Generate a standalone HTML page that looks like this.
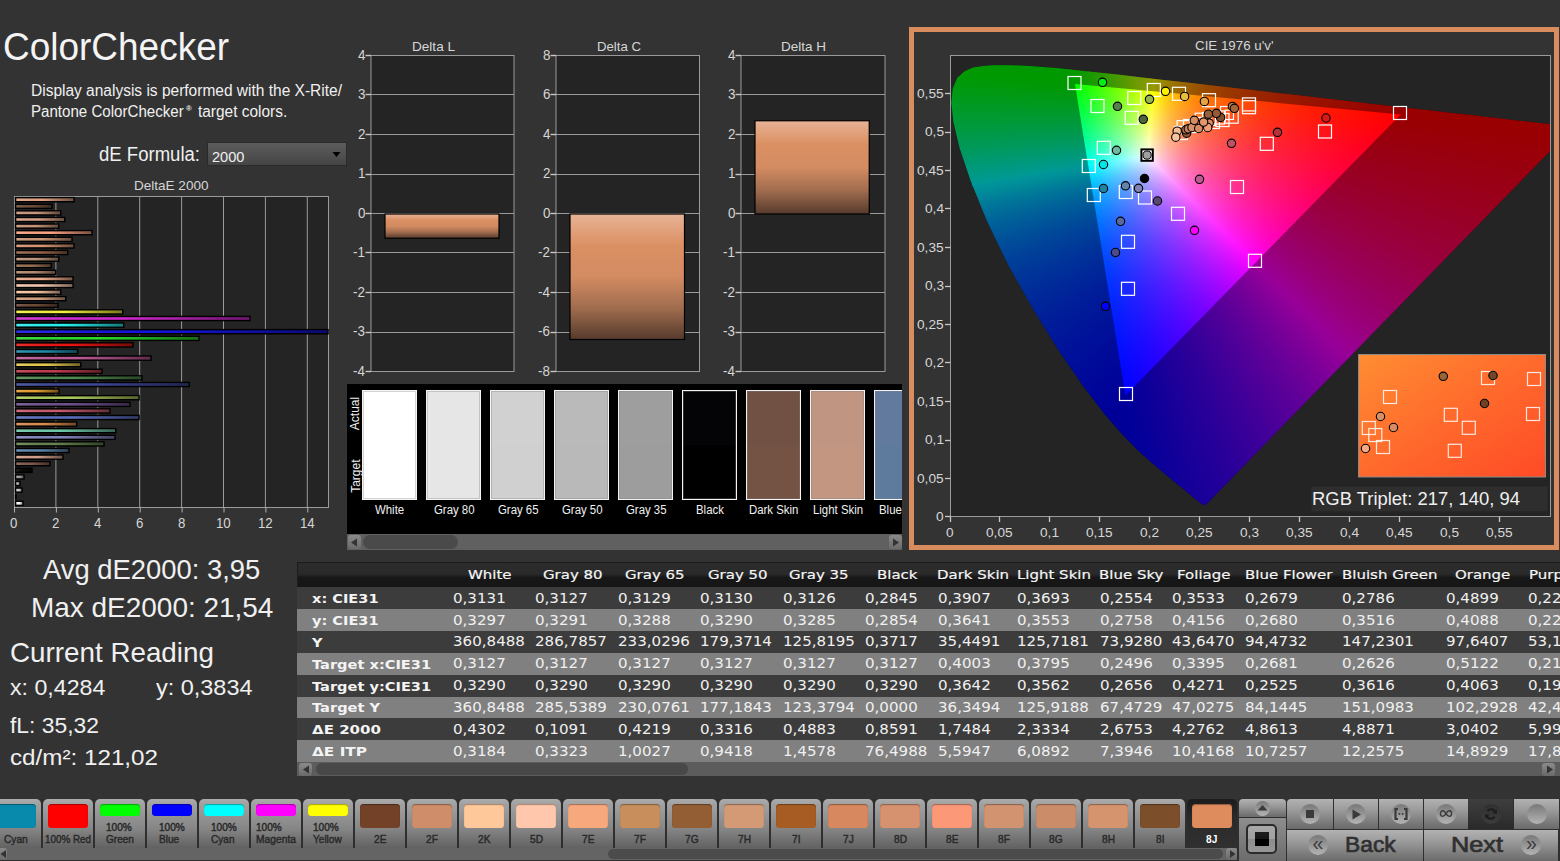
<!DOCTYPE html>
<html lang="en"><head><meta charset="utf-8"><title>ColorChecker</title>
<style>
html,body{margin:0;padding:0;background:#333;}
body{width:1560px;height:861px;overflow:hidden;position:relative;font-family:"Liberation Sans",sans-serif;}
#w{position:absolute;left:0;top:0;width:1560px;height:861px;overflow:hidden;background:#333;}
.t{position:absolute;white-space:nowrap;line-height:1;transform-origin:0 50%;}
.a{position:absolute;display:block;}
.dd{position:absolute;box-sizing:border-box;border:1px solid #2a2a2a;background:linear-gradient(#5c5c5c,#454545);}
.sbtn{position:absolute;width:13px;height:13.5px;border-radius:3px;background:linear-gradient(#8a8a8a,#6a6a6a);}
.dv{font-family:"DejaVu Sans","Liberation Sans",sans-serif;}
.tab{position:absolute;top:0;width:50px;height:49.5px;border-radius:5px 5px 0 0;background:linear-gradient(#acacac 0,#a0a0a0 12%,#868686 60%,#626262 100%);}
.tab.sel{background:linear-gradient(#1c1c1c,#2a2a2a 40%,#303030);}
.chip{position:absolute;width:40px;border-radius:3.5px;box-shadow:inset 0 1px 1px rgba(0,0,0,.35);}
.btn{position:absolute;background:linear-gradient(#b2b2b2 0,#9c9c9c 35%,#6a6a6a 100%);}
.cb{border-radius:50%;background:linear-gradient(#787878,#b4b4b4);}
.cg{position:absolute;left:0;top:0;width:599px;height:460px;}
</style></head>
<body><div id="w">
<!-- part_left -->
<span class="t" style="left:2.60px;top:26.99px;font-size:39px;color:#f4f4f4;transform:scaleX(0.9479);">ColorChecker</span>
<span class="t" style="left:31.00px;top:82.88px;font-size:15.8px;color:#f0f0f0;transform:scaleX(0.9811);">Display analysis is performed with the X-Rite/</span>
<span class="t" style="left:31.00px;top:103.63px;font-size:15.8px;color:#f0f0f0;transform:scaleX(0.9556);">Pantone ColorChecker</span>
<span class="t" style="left:186.00px;top:105.37px;font-size:7.6px;color:#f0f0f0;font-weight:700;">®</span>
<span class="t" style="left:197.50px;top:103.63px;font-size:15.8px;color:#f0f0f0;transform:scaleX(0.9772);">target colors.</span>
<span class="t" style="left:99.00px;top:143.57px;font-size:20px;color:#f0f0f0;transform:scaleX(0.9272);">dE Formula:</span>
<div class="dd" style="left:207.3px;top:141.6px;width:139.4px;height:24.8px"></div>
<span class="t" style="left:212.00px;top:148.88px;font-size:15.5px;color:#f0f0f0;transform:scaleX(0.9425);">2000</span>
<svg class="a" style="left:332px;top:151px" width="10" height="7"><path d="M0.5 1h8l-4 5z" fill="#000"/></svg>
<span class="t" style="left:134.25px;top:179.49px;font-size:13.6px;color:#d6d6d6;transform:scaleX(0.9953);">DeltaE 2000</span>
<svg class="a" style="left:0;top:190px" width="340" height="350" viewBox="0 190 340 350"><rect x="14.5" y="196.5" width="314" height="311" fill="#242424" stroke="#9a9a9a"/><line x1="55.9" y1="197" x2="55.9" y2="507" stroke="#9a9a9a"/><line x1="97.8" y1="197" x2="97.8" y2="507" stroke="#9a9a9a"/><line x1="139.7" y1="197" x2="139.7" y2="507" stroke="#9a9a9a"/><line x1="181.6" y1="197" x2="181.6" y2="507" stroke="#9a9a9a"/><line x1="223.5" y1="197" x2="223.5" y2="507" stroke="#9a9a9a"/><line x1="265.4" y1="197" x2="265.4" y2="507" stroke="#9a9a9a"/><line x1="307.3" y1="197" x2="307.3" y2="507" stroke="#9a9a9a"/><line x1="14.5" y1="507" x2="14.5" y2="512.5" stroke="#b0b0b0"/><line x1="56.4" y1="507" x2="56.4" y2="512.5" stroke="#b0b0b0"/><line x1="98.3" y1="507" x2="98.3" y2="512.5" stroke="#b0b0b0"/><line x1="140.2" y1="507" x2="140.2" y2="512.5" stroke="#b0b0b0"/><line x1="182.1" y1="507" x2="182.1" y2="512.5" stroke="#b0b0b0"/><line x1="224.0" y1="507" x2="224.0" y2="512.5" stroke="#b0b0b0"/><line x1="265.9" y1="507" x2="265.9" y2="512.5" stroke="#b0b0b0"/><line x1="307.8" y1="507" x2="307.8" y2="512.5" stroke="#b0b0b0"/><defs><linearGradient id="bsh" x1="0" y1="0" x2="1" y2="0"><stop offset="0" stop-color="#fff" stop-opacity=".12"/><stop offset=".45" stop-color="#000" stop-opacity="0"/><stop offset="1" stop-color="#000" stop-opacity=".5"/></linearGradient></defs><rect x="15.6" y="197.65" width="58.40" height="4.1" fill="rgb(225, 160, 130)" stroke="#000" stroke-width="1.5"/><rect x="16.3" y="198.40" width="57.40" height="2.6" fill="url(#bsh)"/><rect x="15.6" y="204.25" width="36.40" height="4.1" fill="rgb(110, 80, 60)" stroke="#000" stroke-width="1.5"/><rect x="16.3" y="205.00" width="35.40" height="2.6" fill="url(#bsh)"/><rect x="15.6" y="210.85" width="45.15" height="4.1" fill="rgb(200, 150, 125)" stroke="#000" stroke-width="1.5"/><rect x="16.3" y="211.60" width="44.15" height="2.6" fill="url(#bsh)"/><rect x="15.6" y="217.45" width="49.15" height="4.1" fill="rgb(215, 160, 130)" stroke="#000" stroke-width="1.5"/><rect x="16.3" y="218.20" width="48.15" height="2.6" fill="url(#bsh)"/><rect x="15.6" y="224.05" width="43.15" height="4.1" fill="rgb(200, 150, 120)" stroke="#000" stroke-width="1.5"/><rect x="16.3" y="224.80" width="42.15" height="2.6" fill="url(#bsh)"/><rect x="15.6" y="230.65" width="76.40" height="4.1" fill="rgb(250, 160, 130)" stroke="#000" stroke-width="1.5"/><rect x="16.3" y="231.40" width="75.40" height="2.6" fill="url(#bsh)"/><rect x="15.6" y="237.25" width="56.40" height="4.1" fill="rgb(205, 150, 120)" stroke="#000" stroke-width="1.5"/><rect x="16.3" y="238.00" width="55.40" height="2.6" fill="url(#bsh)"/><rect x="15.6" y="243.85" width="58.40" height="4.1" fill="rgb(215, 150, 115)" stroke="#000" stroke-width="1.5"/><rect x="16.3" y="244.60" width="57.40" height="2.6" fill="url(#bsh)"/><rect x="15.6" y="250.45" width="52.15" height="4.1" fill="rgb(150, 100, 70)" stroke="#000" stroke-width="1.5"/><rect x="16.3" y="251.20" width="51.15" height="2.6" fill="url(#bsh)"/><rect x="15.6" y="257.05" width="43.15" height="4.1" fill="rgb(190, 150, 125)" stroke="#000" stroke-width="1.5"/><rect x="16.3" y="257.80" width="42.15" height="2.6" fill="url(#bsh)"/><rect x="15.6" y="263.65" width="35.65" height="4.1" fill="rgb(150, 110, 80)" stroke="#000" stroke-width="1.5"/><rect x="16.3" y="264.40" width="34.65" height="2.6" fill="url(#bsh)"/><rect x="15.6" y="270.25" width="40.15" height="4.1" fill="rgb(180, 140, 115)" stroke="#000" stroke-width="1.5"/><rect x="16.3" y="271.00" width="39.15" height="2.6" fill="url(#bsh)"/><rect x="15.6" y="276.85" width="57.40" height="4.1" fill="rgb(235, 170, 140)" stroke="#000" stroke-width="1.5"/><rect x="16.3" y="277.60" width="56.40" height="2.6" fill="url(#bsh)"/><rect x="15.6" y="283.45" width="57.40" height="4.1" fill="rgb(245, 200, 175)" stroke="#000" stroke-width="1.5"/><rect x="16.3" y="284.20" width="56.40" height="2.6" fill="url(#bsh)"/><rect x="15.6" y="290.05" width="45.15" height="4.1" fill="rgb(250, 200, 165)" stroke="#000" stroke-width="1.5"/><rect x="16.3" y="290.80" width="44.15" height="2.6" fill="url(#bsh)"/><rect x="15.6" y="296.65" width="50.15" height="4.1" fill="rgb(215, 160, 125)" stroke="#000" stroke-width="1.5"/><rect x="16.3" y="297.40" width="49.15" height="2.6" fill="url(#bsh)"/><rect x="15.6" y="303.25" width="42.40" height="4.1" fill="rgb(110, 75, 55)" stroke="#000" stroke-width="1.5"/><rect x="16.3" y="304.00" width="41.40" height="2.6" fill="url(#bsh)"/><rect x="15.6" y="309.85" width="107.15" height="4.1" fill="rgb(240, 240, 60)" stroke="#000" stroke-width="1.5"/><rect x="16.3" y="310.60" width="106.15" height="2.6" fill="url(#bsh)"/><rect x="15.6" y="316.45" width="234.40" height="4.1" fill="rgb(210, 40, 210)" stroke="#000" stroke-width="1.5"/><rect x="16.3" y="317.20" width="233.40" height="2.6" fill="url(#bsh)"/><rect x="15.6" y="323.05" width="108.15" height="4.1" fill="rgb(40, 240, 240)" stroke="#000" stroke-width="1.5"/><rect x="16.3" y="323.80" width="107.15" height="2.6" fill="url(#bsh)"/><rect x="15.6" y="329.65" width="312.40" height="4.1" fill="rgb(20, 20, 225)" stroke="#000" stroke-width="1.5"/><rect x="16.3" y="330.40" width="311.40" height="2.6" fill="url(#bsh)"/><rect x="15.6" y="336.25" width="183.40" height="4.1" fill="rgb(40, 220, 40)" stroke="#000" stroke-width="1.5"/><rect x="16.3" y="337.00" width="182.40" height="2.6" fill="url(#bsh)"/><rect x="15.6" y="342.85" width="117.40" height="4.1" fill="rgb(235, 20, 20)" stroke="#000" stroke-width="1.5"/><rect x="16.3" y="343.60" width="116.40" height="2.6" fill="url(#bsh)"/><rect x="15.6" y="349.45" width="62.15" height="4.1" fill="rgb(30, 140, 170)" stroke="#000" stroke-width="1.5"/><rect x="16.3" y="350.20" width="61.15" height="2.6" fill="url(#bsh)"/><rect x="15.6" y="356.05" width="135.40" height="4.1" fill="rgb(190, 90, 150)" stroke="#000" stroke-width="1.5"/><rect x="16.3" y="356.80" width="134.40" height="2.6" fill="url(#bsh)"/><rect x="15.6" y="362.65" width="65.15" height="4.1" fill="rgb(230, 200, 80)" stroke="#000" stroke-width="1.5"/><rect x="16.3" y="363.40" width="64.15" height="2.6" fill="url(#bsh)"/><rect x="15.6" y="369.25" width="86.40" height="4.1" fill="rgb(190, 60, 80)" stroke="#000" stroke-width="1.5"/><rect x="16.3" y="370.00" width="85.40" height="2.6" fill="url(#bsh)"/><rect x="15.6" y="375.85" width="126.40" height="4.1" fill="rgb(80, 140, 80)" stroke="#000" stroke-width="1.5"/><rect x="16.3" y="376.60" width="125.40" height="2.6" fill="url(#bsh)"/><rect x="15.6" y="382.45" width="173.65" height="4.1" fill="rgb(60, 70, 150)" stroke="#000" stroke-width="1.5"/><rect x="16.3" y="383.20" width="172.65" height="2.6" fill="url(#bsh)"/><rect x="15.6" y="389.05" width="43.40" height="4.1" fill="rgb(230, 160, 50)" stroke="#000" stroke-width="1.5"/><rect x="16.3" y="389.80" width="42.40" height="2.6" fill="url(#bsh)"/><rect x="15.6" y="395.65" width="123.40" height="4.1" fill="rgb(170, 200, 90)" stroke="#000" stroke-width="1.5"/><rect x="16.3" y="396.40" width="122.40" height="2.6" fill="url(#bsh)"/><rect x="15.6" y="402.25" width="114.40" height="4.1" fill="rgb(110, 80, 140)" stroke="#000" stroke-width="1.5"/><rect x="16.3" y="403.00" width="113.40" height="2.6" fill="url(#bsh)"/><rect x="15.6" y="408.85" width="94.40" height="4.1" fill="rgb(200, 90, 110)" stroke="#000" stroke-width="1.5"/><rect x="16.3" y="409.60" width="93.40" height="2.6" fill="url(#bsh)"/><rect x="15.6" y="415.45" width="123.40" height="4.1" fill="rgb(90, 110, 190)" stroke="#000" stroke-width="1.5"/><rect x="16.3" y="416.20" width="122.40" height="2.6" fill="url(#bsh)"/><rect x="15.6" y="422.05" width="61.15" height="4.1" fill="rgb(220, 140, 80)" stroke="#000" stroke-width="1.5"/><rect x="16.3" y="422.80" width="60.15" height="2.6" fill="url(#bsh)"/><rect x="15.6" y="428.65" width="100.15" height="4.1" fill="rgb(110, 200, 170)" stroke="#000" stroke-width="1.5"/><rect x="16.3" y="429.40" width="99.15" height="2.6" fill="url(#bsh)"/><rect x="15.6" y="435.25" width="99.40" height="4.1" fill="rgb(130, 130, 190)" stroke="#000" stroke-width="1.5"/><rect x="16.3" y="436.00" width="98.40" height="2.6" fill="url(#bsh)"/><rect x="15.6" y="441.85" width="88.40" height="4.1" fill="rgb(100, 130, 80)" stroke="#000" stroke-width="1.5"/><rect x="16.3" y="442.60" width="87.40" height="2.6" fill="url(#bsh)"/><rect x="15.6" y="448.45" width="53.40" height="4.1" fill="rgb(90, 130, 170)" stroke="#000" stroke-width="1.5"/><rect x="16.3" y="449.20" width="52.40" height="2.6" fill="url(#bsh)"/><rect x="15.6" y="455.05" width="47.40" height="4.1" fill="rgb(210, 160, 140)" stroke="#000" stroke-width="1.5"/><rect x="16.3" y="455.80" width="46.40" height="2.6" fill="url(#bsh)"/><rect x="15.6" y="461.65" width="34.40" height="4.1" fill="rgb(130, 90, 75)" stroke="#000" stroke-width="1.5"/><rect x="16.3" y="462.40" width="33.40" height="2.6" fill="url(#bsh)"/><rect x="15.6" y="468.25" width="16.40" height="4.1" fill="rgb(10, 10, 10)" stroke="#000" stroke-width="1.5"/><rect x="16.3" y="469.00" width="15.40" height="2.6" fill="url(#bsh)"/><rect x="15.6" y="474.85" width="8.40" height="4.1" fill="rgb(160, 160, 160)" stroke="#000" stroke-width="1.5"/><rect x="16.3" y="475.60" width="7.40" height="2.6" fill="url(#bsh)"/><rect x="15.6" y="481.45" width="4.40" height="4.1" fill="rgb(190, 190, 190)" stroke="#000" stroke-width="1.5"/><rect x="16.3" y="482.20" width="3.40" height="2.6" fill="url(#bsh)"/><rect x="15.6" y="488.05" width="6.40" height="4.1" fill="rgb(210, 210, 210)" stroke="#000" stroke-width="1.5"/><rect x="16.3" y="488.80" width="5.40" height="2.6" fill="url(#bsh)"/><rect x="15.6" y="494.65" width="0.40" height="4.1" fill="rgb(230, 230, 230)" stroke="#000" stroke-width="1.5"/><rect x="16.3" y="495.40" width="0.50" height="2.6" fill="url(#bsh)"/><rect x="15.6" y="501.25" width="7.40" height="4.1" fill="rgb(255, 255, 255)" stroke="#000" stroke-width="1.5"/><rect x="16.3" y="502.00" width="6.40" height="2.6" fill="url(#bsh)"/></svg>
<span class="t" style="left:9.82px;top:516.62px;font-size:13.8px;color:#d6d6d6;transform:scaleX(0.9600);">0</span>
<span class="t" style="left:52.22px;top:516.62px;font-size:13.8px;color:#d6d6d6;transform:scaleX(0.9600);">2</span>
<span class="t" style="left:94.12px;top:516.62px;font-size:13.8px;color:#d6d6d6;transform:scaleX(0.9600);">4</span>
<span class="t" style="left:136.02px;top:516.62px;font-size:13.8px;color:#d6d6d6;transform:scaleX(0.9600);">6</span>
<span class="t" style="left:177.92px;top:516.62px;font-size:13.8px;color:#d6d6d6;transform:scaleX(0.9600);">8</span>
<span class="t" style="left:216.13px;top:516.62px;font-size:13.8px;color:#d6d6d6;transform:scaleX(0.9600);">10</span>
<span class="t" style="left:258.03px;top:516.62px;font-size:13.8px;color:#d6d6d6;transform:scaleX(0.9600);">12</span>
<span class="t" style="left:299.93px;top:516.62px;font-size:13.8px;color:#d6d6d6;transform:scaleX(0.9600);">14</span>
<!-- part_delta -->
<span class="t" style="left:412.00px;top:39.74px;font-size:13.3px;color:#d6d6d6;transform:scaleX(1.0204);">Delta L</span>
<svg class="a" style="left:358.5px;top:40px" width="167.0" height="345" viewBox="358.5 40 167.0 345"><rect x="370.5" y="55.5" width="143.0" height="316.0" fill="#242424" stroke="#9a9a9a"/><line x1="365.0" y1="55.5" x2="370.5" y2="55.5" stroke="#c8c8c8" stroke-width="1.4"/><line x1="370.5" y1="94.5" x2="513.5" y2="94.5" stroke="#9a9a9a"/><line x1="365.0" y1="94.5" x2="370.5" y2="94.5" stroke="#c8c8c8" stroke-width="1.4"/><line x1="370.5" y1="134.5" x2="513.5" y2="134.5" stroke="#9a9a9a"/><line x1="365.0" y1="134.5" x2="370.5" y2="134.5" stroke="#c8c8c8" stroke-width="1.4"/><line x1="370.5" y1="174.5" x2="513.5" y2="174.5" stroke="#9a9a9a"/><line x1="365.0" y1="174.5" x2="370.5" y2="174.5" stroke="#c8c8c8" stroke-width="1.4"/><line x1="370.5" y1="213.5" x2="513.5" y2="213.5" stroke="#9a9a9a"/><line x1="365.0" y1="213.5" x2="370.5" y2="213.5" stroke="#c8c8c8" stroke-width="1.4"/><line x1="370.5" y1="252.5" x2="513.5" y2="252.5" stroke="#9a9a9a"/><line x1="365.0" y1="252.5" x2="370.5" y2="252.5" stroke="#c8c8c8" stroke-width="1.4"/><line x1="370.5" y1="292.5" x2="513.5" y2="292.5" stroke="#9a9a9a"/><line x1="365.0" y1="292.5" x2="370.5" y2="292.5" stroke="#c8c8c8" stroke-width="1.4"/><line x1="370.5" y1="332.5" x2="513.5" y2="332.5" stroke="#9a9a9a"/><line x1="365.0" y1="332.5" x2="370.5" y2="332.5" stroke="#c8c8c8" stroke-width="1.4"/><line x1="365.0" y1="371.5" x2="370.5" y2="371.5" stroke="#c8c8c8" stroke-width="1.4"/><defs><linearGradient id="gL" x1="0" y1="0" x2="0" y2="1"><stop offset="0" stop-color="#e8b396"/><stop offset=".25" stop-color="#db9063"/><stop offset=".5" stop-color="#d38b62"/><stop offset=".75" stop-color="#a06c4e"/><stop offset="1" stop-color="#553a2c"/></linearGradient></defs><rect x="384.5" y="214" width="114.0" height="24.25" fill="url(#gL)" stroke="#000" stroke-width="1.2"/></svg>
<span class="t" style="left:357.56px;top:48.72px;font-size:13.8px;color:#d6d6d6;transform:scaleX(0.9700);">4</span>
<span class="t" style="left:357.56px;top:88.22px;font-size:13.8px;color:#d6d6d6;transform:scaleX(0.9700);">3</span>
<span class="t" style="left:357.56px;top:127.72px;font-size:13.8px;color:#d6d6d6;transform:scaleX(0.9700);">2</span>
<span class="t" style="left:357.56px;top:167.22px;font-size:13.8px;color:#d6d6d6;transform:scaleX(0.9700);">1</span>
<span class="t" style="left:357.56px;top:206.72px;font-size:13.8px;color:#d6d6d6;transform:scaleX(0.9700);">0</span>
<span class="t" style="left:353.10px;top:246.22px;font-size:13.8px;color:#d6d6d6;transform:scaleX(0.9700);">-1</span>
<span class="t" style="left:353.10px;top:285.72px;font-size:13.8px;color:#d6d6d6;transform:scaleX(0.9700);">-2</span>
<span class="t" style="left:353.10px;top:325.22px;font-size:13.8px;color:#d6d6d6;transform:scaleX(0.9700);">-3</span>
<span class="t" style="left:353.10px;top:364.72px;font-size:13.8px;color:#d6d6d6;transform:scaleX(0.9700);">-4</span>
<span class="t" style="left:596.75px;top:39.74px;font-size:13.3px;color:#d6d6d6;transform:scaleX(0.9921);">Delta C</span>
<svg class="a" style="left:543.5px;top:40px" width="167.5" height="345" viewBox="543.5 40 167.5 345"><rect x="555.5" y="55.5" width="143.5" height="316.0" fill="#242424" stroke="#9a9a9a"/><line x1="550.0" y1="55.5" x2="555.5" y2="55.5" stroke="#c8c8c8" stroke-width="1.4"/><line x1="555.5" y1="94.5" x2="699" y2="94.5" stroke="#9a9a9a"/><line x1="550.0" y1="94.5" x2="555.5" y2="94.5" stroke="#c8c8c8" stroke-width="1.4"/><line x1="555.5" y1="134.5" x2="699" y2="134.5" stroke="#9a9a9a"/><line x1="550.0" y1="134.5" x2="555.5" y2="134.5" stroke="#c8c8c8" stroke-width="1.4"/><line x1="555.5" y1="174.5" x2="699" y2="174.5" stroke="#9a9a9a"/><line x1="550.0" y1="174.5" x2="555.5" y2="174.5" stroke="#c8c8c8" stroke-width="1.4"/><line x1="555.5" y1="213.5" x2="699" y2="213.5" stroke="#9a9a9a"/><line x1="550.0" y1="213.5" x2="555.5" y2="213.5" stroke="#c8c8c8" stroke-width="1.4"/><line x1="555.5" y1="252.5" x2="699" y2="252.5" stroke="#9a9a9a"/><line x1="550.0" y1="252.5" x2="555.5" y2="252.5" stroke="#c8c8c8" stroke-width="1.4"/><line x1="555.5" y1="292.5" x2="699" y2="292.5" stroke="#9a9a9a"/><line x1="550.0" y1="292.5" x2="555.5" y2="292.5" stroke="#c8c8c8" stroke-width="1.4"/><line x1="555.5" y1="332.5" x2="699" y2="332.5" stroke="#9a9a9a"/><line x1="550.0" y1="332.5" x2="555.5" y2="332.5" stroke="#c8c8c8" stroke-width="1.4"/><line x1="550.0" y1="371.5" x2="555.5" y2="371.5" stroke="#c8c8c8" stroke-width="1.4"/><defs><linearGradient id="gC" x1="0" y1="0" x2="0" y2="1"><stop offset="0" stop-color="#e8b396"/><stop offset=".25" stop-color="#db9063"/><stop offset=".5" stop-color="#d38b62"/><stop offset=".75" stop-color="#a06c4e"/><stop offset="1" stop-color="#553a2c"/></linearGradient></defs><rect x="569.5" y="214" width="114.5" height="125.5" fill="url(#gC)" stroke="#000" stroke-width="1.2"/></svg>
<span class="t" style="left:542.56px;top:48.72px;font-size:13.8px;color:#d6d6d6;transform:scaleX(0.9700);">8</span>
<span class="t" style="left:542.56px;top:88.22px;font-size:13.8px;color:#d6d6d6;transform:scaleX(0.9700);">6</span>
<span class="t" style="left:542.56px;top:127.72px;font-size:13.8px;color:#d6d6d6;transform:scaleX(0.9700);">4</span>
<span class="t" style="left:542.56px;top:167.22px;font-size:13.8px;color:#d6d6d6;transform:scaleX(0.9700);">2</span>
<span class="t" style="left:542.56px;top:206.72px;font-size:13.8px;color:#d6d6d6;transform:scaleX(0.9700);">0</span>
<span class="t" style="left:538.10px;top:246.22px;font-size:13.8px;color:#d6d6d6;transform:scaleX(0.9700);">-2</span>
<span class="t" style="left:538.10px;top:285.72px;font-size:13.8px;color:#d6d6d6;transform:scaleX(0.9700);">-4</span>
<span class="t" style="left:538.10px;top:325.22px;font-size:13.8px;color:#d6d6d6;transform:scaleX(0.9700);">-6</span>
<span class="t" style="left:538.10px;top:364.72px;font-size:13.8px;color:#d6d6d6;transform:scaleX(0.9700);">-8</span>
<span class="t" style="left:780.75px;top:39.74px;font-size:13.3px;color:#d6d6d6;transform:scaleX(1.0147);">Delta H</span>
<svg class="a" style="left:728.5px;top:40px" width="168.0" height="345" viewBox="728.5 40 168.0 345"><rect x="740.5" y="55.5" width="144.0" height="316.0" fill="#242424" stroke="#9a9a9a"/><line x1="735.0" y1="55.5" x2="740.5" y2="55.5" stroke="#c8c8c8" stroke-width="1.4"/><line x1="740.5" y1="94.5" x2="884.5" y2="94.5" stroke="#9a9a9a"/><line x1="735.0" y1="94.5" x2="740.5" y2="94.5" stroke="#c8c8c8" stroke-width="1.4"/><line x1="740.5" y1="134.5" x2="884.5" y2="134.5" stroke="#9a9a9a"/><line x1="735.0" y1="134.5" x2="740.5" y2="134.5" stroke="#c8c8c8" stroke-width="1.4"/><line x1="740.5" y1="174.5" x2="884.5" y2="174.5" stroke="#9a9a9a"/><line x1="735.0" y1="174.5" x2="740.5" y2="174.5" stroke="#c8c8c8" stroke-width="1.4"/><line x1="740.5" y1="213.5" x2="884.5" y2="213.5" stroke="#9a9a9a"/><line x1="735.0" y1="213.5" x2="740.5" y2="213.5" stroke="#c8c8c8" stroke-width="1.4"/><line x1="740.5" y1="252.5" x2="884.5" y2="252.5" stroke="#9a9a9a"/><line x1="735.0" y1="252.5" x2="740.5" y2="252.5" stroke="#c8c8c8" stroke-width="1.4"/><line x1="740.5" y1="292.5" x2="884.5" y2="292.5" stroke="#9a9a9a"/><line x1="735.0" y1="292.5" x2="740.5" y2="292.5" stroke="#c8c8c8" stroke-width="1.4"/><line x1="740.5" y1="332.5" x2="884.5" y2="332.5" stroke="#9a9a9a"/><line x1="735.0" y1="332.5" x2="740.5" y2="332.5" stroke="#c8c8c8" stroke-width="1.4"/><line x1="735.0" y1="371.5" x2="740.5" y2="371.5" stroke="#c8c8c8" stroke-width="1.4"/><defs><linearGradient id="gH" x1="0" y1="0" x2="0" y2="1"><stop offset="0" stop-color="#e8b396"/><stop offset=".25" stop-color="#db9063"/><stop offset=".5" stop-color="#d38b62"/><stop offset=".75" stop-color="#a06c4e"/><stop offset="1" stop-color="#553a2c"/></linearGradient></defs><rect x="754.5" y="120.75" width="114.25" height="93.25" fill="url(#gH)" stroke="#000" stroke-width="1.2"/></svg>
<span class="t" style="left:727.56px;top:48.72px;font-size:13.8px;color:#d6d6d6;transform:scaleX(0.9700);">4</span>
<span class="t" style="left:727.56px;top:88.22px;font-size:13.8px;color:#d6d6d6;transform:scaleX(0.9700);">3</span>
<span class="t" style="left:727.56px;top:127.72px;font-size:13.8px;color:#d6d6d6;transform:scaleX(0.9700);">2</span>
<span class="t" style="left:727.56px;top:167.22px;font-size:13.8px;color:#d6d6d6;transform:scaleX(0.9700);">1</span>
<span class="t" style="left:727.56px;top:206.72px;font-size:13.8px;color:#d6d6d6;transform:scaleX(0.9700);">0</span>
<span class="t" style="left:723.10px;top:246.22px;font-size:13.8px;color:#d6d6d6;transform:scaleX(0.9700);">-1</span>
<span class="t" style="left:723.10px;top:285.72px;font-size:13.8px;color:#d6d6d6;transform:scaleX(0.9700);">-2</span>
<span class="t" style="left:723.10px;top:325.22px;font-size:13.8px;color:#d6d6d6;transform:scaleX(0.9700);">-3</span>
<span class="t" style="left:723.10px;top:364.72px;font-size:13.8px;color:#d6d6d6;transform:scaleX(0.9700);">-4</span>
<!-- part_swatch -->
<div class="a" style="left:347px;top:384px;width:555px;height:165.5px;background:#000;overflow:hidden">
<div class="a" style="left:15.399999999999977px;top:6.25px;width:55px;height:109.75px;box-sizing:border-box;border:1px solid #f4f4f4;background:linear-gradient(rgb(255, 255, 255) 0,rgb(255, 255, 255) 50%,rgb(255, 255, 255) 50%,rgb(255, 255, 255) 100%);box-shadow:inset 0 0 0 1px rgba(128,128,128,.35)"></div>
<span class="t" style="left:28.33px;top:120.14px;font-size:12px;color:#f0f0f0;transform:scaleX(0.9500);">White</span>
<div class="a" style="left:79.39999999999998px;top:6.25px;width:55px;height:109.75px;box-sizing:border-box;border:1px solid #f4f4f4;background:linear-gradient(rgb(230, 230, 230) 0,rgb(230, 230, 230) 50%,rgb(230, 230, 230) 50%,rgb(230, 230, 230) 100%);box-shadow:inset 0 0 0 1px rgba(128,128,128,.35)"></div>
<span class="t" style="left:86.62px;top:120.14px;font-size:12px;color:#f0f0f0;transform:scaleX(0.9500);">Gray 80</span>
<div class="a" style="left:143.39999999999998px;top:6.25px;width:55px;height:109.75px;box-sizing:border-box;border:1px solid #f4f4f4;background:linear-gradient(rgb(209, 209, 209) 0,rgb(209, 209, 209) 50%,rgb(208, 208, 208) 50%,rgb(208, 208, 208) 100%);box-shadow:inset 0 0 0 1px rgba(128,128,128,.35)"></div>
<span class="t" style="left:150.62px;top:120.14px;font-size:12px;color:#f0f0f0;transform:scaleX(0.9500);">Gray 65</span>
<div class="a" style="left:207.39999999999998px;top:6.25px;width:55px;height:109.75px;box-sizing:border-box;border:1px solid #f4f4f4;background:linear-gradient(rgb(186, 186, 186) 0,rgb(186, 186, 186) 50%,rgb(185, 185, 185) 50%,rgb(185, 185, 185) 100%);box-shadow:inset 0 0 0 1px rgba(128,128,128,.35)"></div>
<span class="t" style="left:214.62px;top:120.14px;font-size:12px;color:#f0f0f0;transform:scaleX(0.9500);">Gray 50</span>
<div class="a" style="left:271.4px;top:6.25px;width:55px;height:109.75px;box-sizing:border-box;border:1px solid #f4f4f4;background:linear-gradient(rgb(158, 158, 158) 0,rgb(158, 158, 158) 50%,rgb(157, 157, 157) 50%,rgb(157, 157, 157) 100%);box-shadow:inset 0 0 0 1px rgba(128,128,128,.35)"></div>
<span class="t" style="left:278.62px;top:120.14px;font-size:12px;color:#f0f0f0;transform:scaleX(0.9500);">Gray 35</span>
<div class="a" style="left:335.4px;top:6.25px;width:55px;height:109.75px;box-sizing:border-box;border:1px solid #f4f4f4;background:linear-gradient(rgb(4, 4, 7) 0,rgb(4, 4, 7) 50%,rgb(0, 0, 0) 50%,rgb(0, 0, 0) 100%);box-shadow:inset 0 0 0 1px rgba(128,128,128,.35)"></div>
<span class="t" style="left:348.96px;top:120.14px;font-size:12px;color:#f0f0f0;transform:scaleX(0.9500);">Black</span>
<div class="a" style="left:399.4px;top:6.25px;width:55px;height:109.75px;box-sizing:border-box;border:1px solid #f4f4f4;background:linear-gradient(rgb(113, 81, 67) 0,rgb(113, 81, 67) 50%,rgb(116, 82, 68) 50%,rgb(116, 82, 68) 100%);box-shadow:inset 0 0 0 1px rgba(128,128,128,.35)"></div>
<span class="t" style="left:402.19px;top:120.14px;font-size:12px;color:#f0f0f0;transform:scaleX(0.9500);">Dark Skin</span>
<div class="a" style="left:463.4px;top:6.25px;width:55px;height:109.75px;box-sizing:border-box;border:1px solid #f4f4f4;background:linear-gradient(rgb(192, 149, 129) 0,rgb(192, 149, 129) 50%,rgb(195, 150, 130) 50%,rgb(195, 150, 130) 100%);box-shadow:inset 0 0 0 1px rgba(128,128,128,.35)"></div>
<span class="t" style="left:465.87px;top:120.14px;font-size:12px;color:#f0f0f0;transform:scaleX(0.9500);">Light Skin</span>
<div class="a" style="left:527.4px;top:6.25px;width:55px;height:109.75px;box-sizing:border-box;border:1px solid #f4f4f4;background:linear-gradient(rgb(98, 122, 158) 0,rgb(98, 122, 158) 50%,rgb(94, 122, 157) 50%,rgb(94, 122, 157) 100%);box-shadow:inset 0 0 0 1px rgba(128,128,128,.35)"></div>
<span class="t" style="left:532.41px;top:120.14px;font-size:12px;color:#f0f0f0;transform:scaleX(0.9500);">Blue Sky</span>
<span class="t" style="left:-7.68px;top:24.00px;font-size:12px;color:#f0f0f0;width:32.35px;transform-origin:50% 50%;transform:rotate(-90deg)">Actual</span>
<span class="t" style="left:-8.32px;top:85.60px;font-size:12px;color:#f0f0f0;width:33.64px;transform-origin:50% 50%;transform:rotate(-90deg)">Target</span>
<div class="a" style="left:0;top:150px;width:556px;height:15.5px;background:#606060"></div>
<div class="a" style="left:16px;top:151px;width:94.5px;height:13.5px;border-radius:7px;background:#4a4a4a"></div>
<div class="sbtn" style="left:0.5px;top:151px"></div><svg class="a" style="left:3px;top:153.5px" width="8" height="9"><path d="M7 0.5v8l-6-4z" fill="#333"/></svg>
<div class="sbtn" style="left:541.5px;top:151px"></div><svg class="a" style="left:545px;top:153.5px" width="8" height="9"><path d="M1 0.5v8l6-4z" fill="#333"/></svg>
</div>
<!-- part_cie -->
<div class="a" style="left:908.8px;top:27px;width:650.2px;height:522.5px;box-sizing:border-box;border:5.8px solid #d98c5e;background:#333"></div>
<span class="t" style="left:1195.00px;top:39.00px;font-size:13px;color:#d6d6d6;transform:scaleX(1.0260);">CIE 1976 u'v'</span>
<div class="a" style="left:950.0px;top:55.0px;width:601.0px;height:462.0px;background:#242424"></div>
<div class="a" style="left:951.0px;top:56.0px;width:599px;height:460px;overflow:hidden"><div class="a" style="left:0;top:0;width:599px;height:460px;clip-path:polygon(254.8px 448.7px,254.4px 448.8px,253.8px 448.7px,253.2px 448.7px,252.4px 448.6px,251.2px 448.0px,249.2px 446.7px,246.7px 444.8px,243.3px 442.1px,239.0px 438.6px,233.8px 434.1px,227.4px 428.9px,219.6px 422.4px,210.3px 414.7px,199.4px 405.5px,186.7px 393.9px,172.1px 379.3px,153.8px 358.3px,131.8px 329.6px,107.4px 294.0px,81.8px 252.5px,56.9px 208.3px,35.8px 164.5px,19.7px 124.8px,8.6px 91.7px,2.5px 65.9px,0.4px 46.7px,1.8px 32.5px,6.2px 22.1px,13.2px 15.4px,22.1px 11.6px,32.3px 9.9px,43.4px 9.3px,54.7px 9.2px,66.2px 9.5px,78.2px 10.1px,90.9px 11.0px,104.5px 12.1px,119.2px 13.5px,135.0px 15.2px,152.1px 17.0px,170.7px 19.1px,190.9px 21.4px,212.7px 23.9px,236.2px 26.6px,261.3px 29.5px,288.0px 32.5px,316.1px 35.8px,345.1px 39.1px,374.3px 42.5px,402.5px 45.7px,430.3px 48.9px,456.1px 51.9px,479.6px 54.6px,500.7px 57.0px,519.2px 59.1px,535.3px 61.0px,549.2px 62.6px,561.5px 64.0px,572.5px 65.2px,582.0px 66.3px,590.2px 67.3px,596.7px 68.0px,602.0px 68.6px,606.4px 69.2px,609.8px 69.5px,612.2px 69.8px,614.2px 70.1px,616.0px 70.3px,617.4px 70.4px,618.9px 70.6px,620.3px 70.8px,621.3px 70.9px,621.8px 70.9px,622.2px 71.0px,622.4px 71.0px);background:#000"><div class="cg" style="clip-path:polygon(195.7px 100.8px,1258.3px 1159.5px,1398.2px -333.9px,335.6px -1392.6px);background:conic-gradient(from -43.6deg at 174.4px 339.4px,#00ff00 0.0deg,#00ff00 48.7deg,#00eb00 49.9deg,#00d400 51.2deg,#00c000 52.4deg,#00ae00 53.7deg,#009100 56.2deg,#007900 58.7deg,#006600 61.2deg,#005600 63.7deg,#004800 66.2deg,#003c00 68.7deg,#003100 71.1deg,#001f00 76.1deg,#000100 87.4deg,#000000 176.0deg),conic-gradient(from 7.3deg at 124.0px 27.9px,#000000 0.0deg,#000000 87.4deg,#000003 88.6deg,#00000d 91.1deg,#000019 93.6deg,#00003c 101.1deg,#000065 108.6deg,#000074 111.1deg,#000096 116.1deg,#0000be 121.1deg,#0000d5 123.6deg,#0000ef 126.1deg,#0000fd 127.3deg,#0000ff 128.6deg,#0000ff 176.0deg),#ff0000;background-blend-mode:screen,screen,normal"></div><div class="cg" style="clip-path:polygon(197.7px 101.2px,-1282.0px 347.2px,-1142.0px -1146.2px,337.6px -1392.2px);background:conic-gradient(from 262.8deg at 174.4px 339.4px,#000000 0.0deg,#000000 87.4deg,#080000 88.6deg,#400000 92.4deg,#680000 94.9deg,#ac0000 98.6deg,#df0000 101.1deg,#fa0000 102.4deg,#ff0000 103.6deg,#ff0000 176.0deg),conic-gradient(from 187.3deg at 449.7px 58.4px,#0000ff 0.0deg,#0000ff 72.4deg,#0000f5 73.6deg,#0000c0 76.1deg,#000090 78.6deg,#000065 81.1deg,#00002b 84.9deg,#000008 87.4deg,#000000 88.6deg,#000000 176.0deg),#00ff00;background-blend-mode:screen,screen,normal"></div><div class="cg" style="clip-path:polygon(197.2px 99.3px,-1282.5px 345.2px,-219.9px 1404.0px,1259.8px 1158.0px);background:conic-gradient(from 82.8deg at 124.0px 27.9px,#ff0000 0.0deg,#ff0000 51.2deg,#fb0000 52.4deg,#d30000 56.2deg,#a60000 61.2deg,#920000 63.7deg,#6e0000 68.7deg,#4e0000 73.6deg,#230000 81.1deg,#030000 87.4deg,#000000 88.6deg,#000000 176.0deg),conic-gradient(from 136.4deg at 449.7px 58.4px,#000000 0.0deg,#000000 87.4deg,#000800 91.1deg,#001f00 98.6deg,#003300 103.6deg,#003f00 106.1deg,#005400 109.8deg,#006f00 113.6deg,#008600 116.1deg,#00a100 118.6deg,#00c400 121.1deg,#00da00 122.3deg,#00f200 123.6deg,#00ff00 124.8deg,#00ff00 176.0deg),#0000ff;background-blend-mode:screen,screen,normal"></div></div></div>
<svg class="a" style="left:915px;top:33px" width="638" height="511" viewBox="915 33 638 511"><defs><clipPath id="cl"><polygon points="1205.8,504.7 1205.4,504.8 1204.8,504.7 1204.2,504.7 1203.4,504.6 1202.2,504.0 1200.2,502.7 1197.7,500.8 1194.3,498.1 1190.0,494.6 1184.8,490.1 1178.4,484.9 1170.6,478.4 1161.3,470.7 1150.4,461.5 1137.7,449.9 1123.1,435.3 1104.8,414.3 1082.8,385.6 1058.4,350.0 1032.8,308.5 1007.9,264.3 986.8,220.5 970.7,180.8 959.6,147.7 953.5,121.9 951.4,102.7 952.8,88.5 957.2,78.1 964.2,71.4 973.1,67.6 983.3,65.9 994.4,65.3 1005.7,65.2 1017.2,65.5 1029.2,66.1 1041.9,67.0 1055.5,68.1 1070.2,69.5 1086.0,71.2 1103.1,73.0 1121.7,75.1 1141.9,77.4 1163.7,79.9 1187.2,82.6 1212.3,85.5 1239.0,88.5 1267.1,91.8 1296.1,95.1 1325.3,98.5 1353.5,101.7 1381.3,104.9 1407.1,107.9 1430.6,110.6 1451.7,113.0 1470.2,115.1 1486.3,117.0 1500.2,118.6 1512.5,120.0 1523.5,121.2 1533.0,122.3 1541.2,123.3 1547.7,124.0 1553.0,124.6 1557.4,125.2 1560.8,125.5 1563.2,125.8 1565.2,126.1 1567.0,126.3 1568.4,126.4 1569.9,126.6 1571.3,126.8 1572.3,126.9 1572.8,126.9 1573.2,127.0 1573.4,127.0"/></clipPath><clipPath id="cr"><rect x="951.0" y="56.0" width="599.0" height="460.0"/></clipPath><linearGradient id="ins" x1="0" y1="0" x2="1" y2="1"><stop offset="0" stop-color="#ff8d33"/><stop offset=".5" stop-color="#ff6a2c"/><stop offset="1" stop-color="#ff4a26"/></linearGradient></defs><rect x="950.5" y="55.5" width="600.0" height="461.0" fill="none" stroke="#9a9a9a"/><g clip-path="url(#cr)"><g clip-path="url(#cl)"><path d="M900,0H1600V600H900ZM1400.7,114.4L1075.0,83.9L1125.4,395.4Z" fill="#000" fill-opacity="0.4" fill-rule="evenodd"/></g></g><line x1="950.5" y1="516.5" x2="950.5" y2="522.0" stroke="#c8c8c8" stroke-width="1.3"/><line x1="945.0" y1="516.5" x2="950.5" y2="516.5" stroke="#c8c8c8" stroke-width="1.3"/><line x1="999.5" y1="516.5" x2="999.5" y2="522.0" stroke="#c8c8c8" stroke-width="1.3"/><line x1="945.0" y1="478.5" x2="950.5" y2="478.5" stroke="#c8c8c8" stroke-width="1.3"/><line x1="1049.5" y1="516.5" x2="1049.5" y2="522.0" stroke="#c8c8c8" stroke-width="1.3"/><line x1="945.0" y1="440.5" x2="950.5" y2="440.5" stroke="#c8c8c8" stroke-width="1.3"/><line x1="1099.5" y1="516.5" x2="1099.5" y2="522.0" stroke="#c8c8c8" stroke-width="1.3"/><line x1="945.0" y1="401.5" x2="950.5" y2="401.5" stroke="#c8c8c8" stroke-width="1.3"/><line x1="1149.5" y1="516.5" x2="1149.5" y2="522.0" stroke="#c8c8c8" stroke-width="1.3"/><line x1="945.0" y1="362.5" x2="950.5" y2="362.5" stroke="#c8c8c8" stroke-width="1.3"/><line x1="1199.5" y1="516.5" x2="1199.5" y2="522.0" stroke="#c8c8c8" stroke-width="1.3"/><line x1="945.0" y1="324.5" x2="950.5" y2="324.5" stroke="#c8c8c8" stroke-width="1.3"/><line x1="1249.5" y1="516.5" x2="1249.5" y2="522.0" stroke="#c8c8c8" stroke-width="1.3"/><line x1="945.0" y1="286.5" x2="950.5" y2="286.5" stroke="#c8c8c8" stroke-width="1.3"/><line x1="1299.5" y1="516.5" x2="1299.5" y2="522.0" stroke="#c8c8c8" stroke-width="1.3"/><line x1="945.0" y1="247.5" x2="950.5" y2="247.5" stroke="#c8c8c8" stroke-width="1.3"/><line x1="1349.5" y1="516.5" x2="1349.5" y2="522.0" stroke="#c8c8c8" stroke-width="1.3"/><line x1="945.0" y1="208.5" x2="950.5" y2="208.5" stroke="#c8c8c8" stroke-width="1.3"/><line x1="1399.5" y1="516.5" x2="1399.5" y2="522.0" stroke="#c8c8c8" stroke-width="1.3"/><line x1="945.0" y1="170.5" x2="950.5" y2="170.5" stroke="#c8c8c8" stroke-width="1.3"/><line x1="1449.5" y1="516.5" x2="1449.5" y2="522.0" stroke="#c8c8c8" stroke-width="1.3"/><line x1="945.0" y1="132.5" x2="950.5" y2="132.5" stroke="#c8c8c8" stroke-width="1.3"/><line x1="1499.5" y1="516.5" x2="1499.5" y2="522.0" stroke="#c8c8c8" stroke-width="1.3"/><line x1="945.0" y1="93.5" x2="950.5" y2="93.5" stroke="#c8c8c8" stroke-width="1.3"/><g fill="none" stroke="#fff" stroke-width="1.2"><rect x="1068.0" y="76.5" width="13" height="13"/><rect x="1091.0" y="99.5" width="13" height="13"/><rect x="1127.8" y="91.5" width="13" height="13"/><rect x="1147.3" y="83.5" width="13" height="13"/><rect x="1172.5" y="87.3" width="13" height="13"/><rect x="1125.2" y="111.3" width="13" height="13"/><rect x="1202.5" y="93.7" width="13" height="13"/><rect x="1242.5" y="97.9" width="13" height="13"/><rect x="1242.5" y="100.7" width="13" height="13"/><rect x="1097.3" y="141.3" width="13" height="13"/><rect x="1082.3" y="159.5" width="13" height="13"/><rect x="1260.3" y="137.3" width="13" height="13"/><rect x="1230.5" y="180.5" width="13" height="13"/><rect x="1087.3" y="188.5" width="13" height="13"/><rect x="1119.3" y="185.5" width="13" height="13"/><rect x="1138.5" y="191.0" width="13" height="13"/><rect x="1171.5" y="207.3" width="13" height="13"/><rect x="1121.5" y="235.3" width="13" height="13"/><rect x="1248.5" y="254.3" width="13" height="13"/><rect x="1121.5" y="282.3" width="13" height="13"/><rect x="1119.5" y="387.5" width="13" height="13"/><rect x="1393.5" y="106.5" width="13" height="13"/><rect x="1318.5" y="125.0" width="13" height="13"/><rect x="1225.2" y="110.2" width="13" height="13"/><rect x="1220.5" y="106.5" width="13" height="13"/><rect x="1216.0" y="113.5" width="13" height="13"/><rect x="1211.5" y="111.0" width="13" height="13"/><rect x="1206.5" y="115.5" width="13" height="13"/><rect x="1202.5" y="112.5" width="13" height="13"/><rect x="1195.2" y="113.2" width="13" height="13"/><rect x="1190.5" y="117.5" width="13" height="13"/><rect x="1183.5" y="119.5" width="13" height="13"/><rect x="1177.1" y="120.6" width="13" height="13"/><rect x="1174.5" y="126.5" width="13" height="13"/></g><rect x="1141.400" y="149.400" width="11.4" height="11.4" fill="#fff" stroke="#000" stroke-width="2"/><circle cx="1147.100" cy="155.100" r="4.1" fill="#a0a0a0" stroke="#000"/><g stroke="#000" stroke-width="1.1"><circle cx="1102.5" cy="82.3" r="4.2" fill="#00f014"/><circle cx="1117.5" cy="106.3" r="4.2" fill="#58804e"/><circle cx="1149.5" cy="99.3" r="4.2" fill="#96b450"/><circle cx="1165.5" cy="91.3" r="4.2" fill="#fff000"/><circle cx="1184.6" cy="96.4" r="4.2" fill="#e6be3c"/><circle cx="1143.3" cy="119.3" r="4.2" fill="#50643c"/><circle cx="1204.4" cy="101.4" r="4.2" fill="#e4a344"/><circle cx="1232.4" cy="106.4" r="4.2" fill="#be7d46"/><circle cx="1234.4" cy="108.3" r="4.2" fill="#a5673a"/><circle cx="1116.5" cy="150.3" r="4.2" fill="#6eb9a0"/><circle cx="1103.5" cy="164.5" r="4.2" fill="#00e6e6"/><circle cx="1144.5" cy="178.5" r="4.2" fill="#000000"/><circle cx="1199.5" cy="179.3" r="4.2" fill="#be5a96"/><circle cx="1231.5" cy="143.3" r="4.2" fill="#be5064"/><circle cx="1277.5" cy="132.3" r="4.2" fill="#b4323c"/><circle cx="1103.5" cy="188.5" r="4.2" fill="#1e82a0"/><circle cx="1125.5" cy="185.8" r="4.2" fill="#6482aa"/><circle cx="1138.5" cy="188.3" r="4.2" fill="#8282b4"/><circle cx="1157.5" cy="201.0" r="4.2" fill="#5a466e"/><circle cx="1120.5" cy="221.3" r="4.2" fill="#5a69a0"/><circle cx="1194.5" cy="230.3" r="4.2" fill="#ff00ff"/><circle cx="1115.5" cy="252.5" r="4.2" fill="#4b4b8c"/><circle cx="1105.5" cy="306.3" r="4.2" fill="#0000ff"/><circle cx="1326.0" cy="118.0" r="4.2" fill="#d71919"/><circle cx="1186.6" cy="133.2" r="4.2" fill="#8c553c"/><circle cx="1185.9" cy="129.8" r="4.2" fill="#be7855"/><circle cx="1188.3" cy="128.8" r="4.2" fill="#c8825f"/><circle cx="1192.0" cy="127.5" r="4.2" fill="#d79169"/><circle cx="1209.2" cy="123.1" r="4.2" fill="#d78c64"/><circle cx="1220.6" cy="117.4" r="4.2" fill="#7d4b2d"/><circle cx="1216.4" cy="113.3" r="4.2" fill="#965a37"/><circle cx="1208.4" cy="114.2" r="4.2" fill="#965f3c"/><circle cx="1198.7" cy="128.5" r="4.2" fill="#d78c64"/><circle cx="1207.7" cy="127.5" r="4.2" fill="#f0a078"/><circle cx="1203.6" cy="122.1" r="4.2" fill="#e1966e"/><circle cx="1194.3" cy="120.3" r="4.2" fill="#d78c64"/><circle cx="1177.2" cy="131.2" r="4.2" fill="#f5be96"/><circle cx="1175.8" cy="137.2" r="4.2" fill="#fac3a0"/></g><rect x="1358.5" y="354.500" width="187" height="122.5" fill="url(#ins)" stroke="#8a8a8a"/><g fill="none" stroke="#fff" stroke-opacity=".85" stroke-width="1.2"><rect x="1383.5" y="390.5" width="13" height="13"/><rect x="1362.3" y="421.5" width="13" height="13"/><rect x="1368.8" y="428.5" width="13" height="13"/><rect x="1376.5" y="440.5" width="13" height="13"/><rect x="1444.3" y="408.3" width="13" height="13"/><rect x="1462.3" y="421.3" width="13" height="13"/><rect x="1448.3" y="444.3" width="13" height="13"/><rect x="1481.5" y="371.5" width="13" height="13"/><rect x="1527.5" y="372.5" width="13" height="13"/><rect x="1526.5" y="407.5" width="13" height="13"/></g><g stroke="#000" stroke-width="1.1"><circle cx="1443.3" cy="376.3" r="4.2" fill="#966437"/><circle cx="1493.0" cy="375.5" r="4.2" fill="#6e4628"/><circle cx="1484.5" cy="403.5" r="4.2" fill="#6e4123"/><circle cx="1380.5" cy="416.5" r="4.2" fill="#d79164"/><circle cx="1393.5" cy="427.5" r="4.2" fill="#d78c64"/><circle cx="1365.5" cy="448.5" r="4.2" fill="#f5aa82"/></g><rect x="1311.3" y="486.300" width="236.2" height="25" fill="#2e2e2e"/></svg>
<span class="t" style="left:1312.00px;top:490.26px;font-size:18.6px;color:#f0f0f0;transform:scaleX(0.9909);">RGB Triplet: 217, 140, 94</span>
<span class="t" style="left:945.70px;top:525.66px;font-size:13.4px;color:#d6d6d6;transform:scaleX(1.0200);">0</span>
<span class="t" style="left:936.40px;top:510.26px;font-size:13.4px;color:#d6d6d6;transform:scaleX(1.0200);">0</span>
<span class="t" style="left:986.20px;top:525.66px;font-size:13.4px;color:#d6d6d6;transform:scaleX(1.0200);">0,05</span>
<span class="t" style="left:917.40px;top:471.76px;font-size:13.4px;color:#d6d6d6;transform:scaleX(1.0200);">0,05</span>
<span class="t" style="left:1040.00px;top:525.66px;font-size:13.4px;color:#d6d6d6;transform:scaleX(1.0200);">0,1</span>
<span class="t" style="left:925.00px;top:433.26px;font-size:13.4px;color:#d6d6d6;transform:scaleX(1.0200);">0,1</span>
<span class="t" style="left:1086.20px;top:525.66px;font-size:13.4px;color:#d6d6d6;transform:scaleX(1.0200);">0,15</span>
<span class="t" style="left:917.40px;top:394.76px;font-size:13.4px;color:#d6d6d6;transform:scaleX(1.0200);">0,15</span>
<span class="t" style="left:1140.00px;top:525.66px;font-size:13.4px;color:#d6d6d6;transform:scaleX(1.0200);">0,2</span>
<span class="t" style="left:925.00px;top:356.26px;font-size:13.4px;color:#d6d6d6;transform:scaleX(1.0200);">0,2</span>
<span class="t" style="left:1186.20px;top:525.66px;font-size:13.4px;color:#d6d6d6;transform:scaleX(1.0200);">0,25</span>
<span class="t" style="left:917.40px;top:317.76px;font-size:13.4px;color:#d6d6d6;transform:scaleX(1.0200);">0,25</span>
<span class="t" style="left:1240.00px;top:525.66px;font-size:13.4px;color:#d6d6d6;transform:scaleX(1.0200);">0,3</span>
<span class="t" style="left:925.00px;top:279.26px;font-size:13.4px;color:#d6d6d6;transform:scaleX(1.0200);">0,3</span>
<span class="t" style="left:1286.20px;top:525.66px;font-size:13.4px;color:#d6d6d6;transform:scaleX(1.0200);">0,35</span>
<span class="t" style="left:917.40px;top:240.76px;font-size:13.4px;color:#d6d6d6;transform:scaleX(1.0200);">0,35</span>
<span class="t" style="left:1340.00px;top:525.66px;font-size:13.4px;color:#d6d6d6;transform:scaleX(1.0200);">0,4</span>
<span class="t" style="left:925.00px;top:202.26px;font-size:13.4px;color:#d6d6d6;transform:scaleX(1.0200);">0,4</span>
<span class="t" style="left:1386.20px;top:525.66px;font-size:13.4px;color:#d6d6d6;transform:scaleX(1.0200);">0,45</span>
<span class="t" style="left:917.40px;top:163.76px;font-size:13.4px;color:#d6d6d6;transform:scaleX(1.0200);">0,45</span>
<span class="t" style="left:1440.00px;top:525.66px;font-size:13.4px;color:#d6d6d6;transform:scaleX(1.0200);">0,5</span>
<span class="t" style="left:925.00px;top:125.26px;font-size:13.4px;color:#d6d6d6;transform:scaleX(1.0200);">0,5</span>
<span class="t" style="left:1486.20px;top:525.66px;font-size:13.4px;color:#d6d6d6;transform:scaleX(1.0200);">0,55</span>
<span class="t" style="left:917.40px;top:86.76px;font-size:13.4px;color:#d6d6d6;transform:scaleX(1.0200);">0,55</span>
<!-- part_stats -->
<span class="t" style="left:42.70px;top:555.58px;font-size:27.2px;color:#f0f0f0;transform:scaleX(1.0071);">Avg dE2000: 3,95</span>
<span class="t" style="left:31.30px;top:593.68px;font-size:27.2px;color:#f0f0f0;transform:scaleX(1.0280);">Max dE2000: 21,54</span>
<span class="t" style="left:10.00px;top:639.28px;font-size:27.2px;color:#f0f0f0;transform:scaleX(1.0222);">Current Reading</span>
<span class="t" style="left:10.00px;top:676.68px;font-size:22px;color:#f0f0f0;transform:scaleX(1.0529);">x: 0,4284</span>
<span class="t" style="left:156.00px;top:676.68px;font-size:22px;color:#f0f0f0;transform:scaleX(1.0661);">y: 0,3834</span>
<span class="t" style="left:10.00px;top:714.78px;font-size:22px;color:#f0f0f0;transform:scaleX(1.0394);">fL: 35,32</span>
<span class="t" style="left:10.00px;top:746.98px;font-size:22px;color:#f0f0f0;transform:scaleX(1.1003);">cd/m²: 121,02</span>
<!-- part_table -->
<div class="a" style="left:297px;top:562px;width:1263px;height:214px;overflow:hidden;background:#3c3c3c">
<div class="a" style="left:0;top:0;width:1263px;height:25.5px;background:linear-gradient(#2c2c2c 0,#2a2a2a 42%,#171717 56%,#161616 100%);border-top:1px solid #1c1c1c;border-left:1px solid #1c1c1c"></div>
<div class="a" style="left:0;top:25.30px;width:1263px;height:22.05px;background:#3c3c3c"></div>
<div class="a" style="left:0;top:47.15px;width:1263px;height:22.05px;background:#808080"></div>
<div class="a" style="left:0;top:69.00px;width:1263px;height:22.05px;background:#3c3c3c"></div>
<div class="a" style="left:0;top:90.85px;width:1263px;height:22.05px;background:#808080"></div>
<div class="a" style="left:0;top:112.70px;width:1263px;height:22.05px;background:#3c3c3c"></div>
<div class="a" style="left:0;top:134.55px;width:1263px;height:22.05px;background:#808080"></div>
<div class="a" style="left:0;top:156.40px;width:1263px;height:22.05px;background:#3c3c3c"></div>
<div class="a" style="left:0;top:178.25px;width:1263px;height:22.05px;background:#808080"></div>
<span class="t dv" style="left:171.23px;top:7.26px;font-size:12.8px;color:#f6f6f6;transform:scaleX(1.1700);-webkit-text-stroke:.18px #f6f6f6;">White</span>
<span class="t dv" style="left:245.69px;top:7.26px;font-size:12.8px;color:#f6f6f6;transform:scaleX(1.1700);-webkit-text-stroke:.18px #f6f6f6;">Gray 80</span>
<span class="t dv" style="left:328.19px;top:7.26px;font-size:12.8px;color:#f6f6f6;transform:scaleX(1.1700);-webkit-text-stroke:.18px #f6f6f6;">Gray 65</span>
<span class="t dv" style="left:410.69px;top:7.26px;font-size:12.8px;color:#f6f6f6;transform:scaleX(1.1700);-webkit-text-stroke:.18px #f6f6f6;">Gray 50</span>
<span class="t dv" style="left:492.19px;top:7.26px;font-size:12.8px;color:#f6f6f6;transform:scaleX(1.1700);-webkit-text-stroke:.18px #f6f6f6;">Gray 35</span>
<span class="t dv" style="left:580.24px;top:7.26px;font-size:12.8px;color:#f6f6f6;transform:scaleX(1.1700);-webkit-text-stroke:.18px #f6f6f6;">Black</span>
<span class="t dv" style="left:639.93px;top:7.26px;font-size:12.8px;color:#f6f6f6;transform:scaleX(1.1700);-webkit-text-stroke:.18px #f6f6f6;">Dark Skin</span>
<span class="t dv" style="left:719.52px;top:7.26px;font-size:12.8px;color:#f6f6f6;transform:scaleX(1.1700);-webkit-text-stroke:.18px #f6f6f6;">Light Skin</span>
<span class="t dv" style="left:802.03px;top:7.26px;font-size:12.8px;color:#f6f6f6;transform:scaleX(1.1700);-webkit-text-stroke:.18px #f6f6f6;">Blue Sky</span>
<span class="t dv" style="left:880.00px;top:7.26px;font-size:12.8px;color:#f6f6f6;transform:scaleX(1.1700);-webkit-text-stroke:.18px #f6f6f6;">Foliage</span>
<span class="t dv" style="left:948.27px;top:7.26px;font-size:12.8px;color:#f6f6f6;transform:scaleX(1.1700);-webkit-text-stroke:.18px #f6f6f6;">Blue Flower</span>
<span class="t dv" style="left:1044.59px;top:7.26px;font-size:12.8px;color:#f6f6f6;transform:scaleX(1.1700);-webkit-text-stroke:.18px #f6f6f6;">Bluish Green</span>
<span class="t dv" style="left:1158.33px;top:7.26px;font-size:12.8px;color:#f6f6f6;transform:scaleX(1.1700);-webkit-text-stroke:.18px #f6f6f6;">Orange</span>
<span class="t dv" style="left:1232.00px;top:7.26px;font-size:12.8px;color:#f6f6f6;transform:scaleX(1.1700);-webkit-text-stroke:.18px #f6f6f6;">Purplish Blue</span>
<span class="t dv" style="left:15.00px;top:30.10px;font-size:13px;color:#f4f4f4;font-weight:700;transform:scaleX(1.1184);">x: CIE31</span>
<span class="t dv" style="left:155.95px;top:29.76px;font-size:13.4px;color:#f0f0f0;transform:scaleX(1.1250);">0,3131</span>
<span class="t dv" style="left:238.45px;top:29.76px;font-size:13.4px;color:#f0f0f0;transform:scaleX(1.1250);">0,3127</span>
<span class="t dv" style="left:320.95px;top:29.76px;font-size:13.4px;color:#f0f0f0;transform:scaleX(1.1250);">0,3129</span>
<span class="t dv" style="left:403.45px;top:29.76px;font-size:13.4px;color:#f0f0f0;transform:scaleX(1.1250);">0,3130</span>
<span class="t dv" style="left:486.20px;top:29.76px;font-size:13.4px;color:#f0f0f0;transform:scaleX(1.1250);">0,3126</span>
<span class="t dv" style="left:568.20px;top:29.76px;font-size:13.4px;color:#f0f0f0;transform:scaleX(1.1250);">0,2845</span>
<span class="t dv" style="left:641.20px;top:29.76px;font-size:13.4px;color:#f0f0f0;transform:scaleX(1.1250);">0,3907</span>
<span class="t dv" style="left:720.20px;top:29.76px;font-size:13.4px;color:#f0f0f0;transform:scaleX(1.1250);">0,3693</span>
<span class="t dv" style="left:802.70px;top:29.76px;font-size:13.4px;color:#f0f0f0;transform:scaleX(1.1250);">0,2554</span>
<span class="t dv" style="left:875.20px;top:29.76px;font-size:13.4px;color:#f0f0f0;transform:scaleX(1.1250);">0,3533</span>
<span class="t dv" style="left:947.70px;top:29.76px;font-size:13.4px;color:#f0f0f0;transform:scaleX(1.1250);">0,2679</span>
<span class="t dv" style="left:1045.20px;top:29.76px;font-size:13.4px;color:#f0f0f0;transform:scaleX(1.1250);">0,2786</span>
<span class="t dv" style="left:1149.20px;top:29.76px;font-size:13.4px;color:#f0f0f0;transform:scaleX(1.1250);">0,4899</span>
<span class="t dv" style="left:1231.20px;top:29.76px;font-size:13.4px;color:#f0f0f0;transform:scaleX(1.1250);">0,2250</span>
<span class="t dv" style="left:15.00px;top:51.95px;font-size:13px;color:#f4f4f4;font-weight:700;transform:scaleX(1.1168);">y: CIE31</span>
<span class="t dv" style="left:155.95px;top:51.61px;font-size:13.4px;color:#f0f0f0;transform:scaleX(1.1250);">0,3297</span>
<span class="t dv" style="left:238.45px;top:51.61px;font-size:13.4px;color:#f0f0f0;transform:scaleX(1.1250);">0,3291</span>
<span class="t dv" style="left:320.95px;top:51.61px;font-size:13.4px;color:#f0f0f0;transform:scaleX(1.1250);">0,3288</span>
<span class="t dv" style="left:403.45px;top:51.61px;font-size:13.4px;color:#f0f0f0;transform:scaleX(1.1250);">0,3290</span>
<span class="t dv" style="left:486.20px;top:51.61px;font-size:13.4px;color:#f0f0f0;transform:scaleX(1.1250);">0,3285</span>
<span class="t dv" style="left:568.20px;top:51.61px;font-size:13.4px;color:#f0f0f0;transform:scaleX(1.1250);">0,2854</span>
<span class="t dv" style="left:641.20px;top:51.61px;font-size:13.4px;color:#f0f0f0;transform:scaleX(1.1250);">0,3641</span>
<span class="t dv" style="left:720.20px;top:51.61px;font-size:13.4px;color:#f0f0f0;transform:scaleX(1.1250);">0,3553</span>
<span class="t dv" style="left:802.70px;top:51.61px;font-size:13.4px;color:#f0f0f0;transform:scaleX(1.1250);">0,2758</span>
<span class="t dv" style="left:875.20px;top:51.61px;font-size:13.4px;color:#f0f0f0;transform:scaleX(1.1250);">0,4156</span>
<span class="t dv" style="left:947.70px;top:51.61px;font-size:13.4px;color:#f0f0f0;transform:scaleX(1.1250);">0,2680</span>
<span class="t dv" style="left:1045.20px;top:51.61px;font-size:13.4px;color:#f0f0f0;transform:scaleX(1.1250);">0,3516</span>
<span class="t dv" style="left:1149.20px;top:51.61px;font-size:13.4px;color:#f0f0f0;transform:scaleX(1.1250);">0,4088</span>
<span class="t dv" style="left:1231.20px;top:51.61px;font-size:13.4px;color:#f0f0f0;transform:scaleX(1.1250);">0,2260</span>
<span class="t dv" style="left:15.00px;top:73.80px;font-size:13px;color:#f4f4f4;font-weight:700;transform:scaleX(1.1154);">Y</span>
<span class="t dv" style="left:155.95px;top:73.46px;font-size:13.4px;color:#f0f0f0;transform:scaleX(1.1250);">360,8488</span>
<span class="t dv" style="left:238.45px;top:73.46px;font-size:13.4px;color:#f0f0f0;transform:scaleX(1.1250);">286,7857</span>
<span class="t dv" style="left:320.95px;top:73.46px;font-size:13.4px;color:#f0f0f0;transform:scaleX(1.1250);">233,0296</span>
<span class="t dv" style="left:403.45px;top:73.46px;font-size:13.4px;color:#f0f0f0;transform:scaleX(1.1250);">179,3714</span>
<span class="t dv" style="left:486.20px;top:73.46px;font-size:13.4px;color:#f0f0f0;transform:scaleX(1.1250);">125,8195</span>
<span class="t dv" style="left:568.20px;top:73.46px;font-size:13.4px;color:#f0f0f0;transform:scaleX(1.1250);">0,3717</span>
<span class="t dv" style="left:641.20px;top:73.46px;font-size:13.4px;color:#f0f0f0;transform:scaleX(1.1250);">35,4491</span>
<span class="t dv" style="left:720.20px;top:73.46px;font-size:13.4px;color:#f0f0f0;transform:scaleX(1.1250);">125,7181</span>
<span class="t dv" style="left:802.70px;top:73.46px;font-size:13.4px;color:#f0f0f0;transform:scaleX(1.1250);">73,9280</span>
<span class="t dv" style="left:875.20px;top:73.46px;font-size:13.4px;color:#f0f0f0;transform:scaleX(1.1250);">43,6470</span>
<span class="t dv" style="left:947.70px;top:73.46px;font-size:13.4px;color:#f0f0f0;transform:scaleX(1.1250);">94,4732</span>
<span class="t dv" style="left:1045.20px;top:73.46px;font-size:13.4px;color:#f0f0f0;transform:scaleX(1.1250);">147,2301</span>
<span class="t dv" style="left:1149.20px;top:73.46px;font-size:13.4px;color:#f0f0f0;transform:scaleX(1.1250);">97,6407</span>
<span class="t dv" style="left:1231.20px;top:73.46px;font-size:13.4px;color:#f0f0f0;transform:scaleX(1.1250);">53,1405</span>
<span class="t dv" style="left:15.00px;top:95.65px;font-size:13px;color:#f4f4f4;font-weight:700;transform:scaleX(1.1220);">Target x:CIE31</span>
<span class="t dv" style="left:155.95px;top:95.31px;font-size:13.4px;color:#f0f0f0;transform:scaleX(1.1250);">0,3127</span>
<span class="t dv" style="left:238.45px;top:95.31px;font-size:13.4px;color:#f0f0f0;transform:scaleX(1.1250);">0,3127</span>
<span class="t dv" style="left:320.95px;top:95.31px;font-size:13.4px;color:#f0f0f0;transform:scaleX(1.1250);">0,3127</span>
<span class="t dv" style="left:403.45px;top:95.31px;font-size:13.4px;color:#f0f0f0;transform:scaleX(1.1250);">0,3127</span>
<span class="t dv" style="left:486.20px;top:95.31px;font-size:13.4px;color:#f0f0f0;transform:scaleX(1.1250);">0,3127</span>
<span class="t dv" style="left:568.20px;top:95.31px;font-size:13.4px;color:#f0f0f0;transform:scaleX(1.1250);">0,3127</span>
<span class="t dv" style="left:641.20px;top:95.31px;font-size:13.4px;color:#f0f0f0;transform:scaleX(1.1250);">0,4003</span>
<span class="t dv" style="left:720.20px;top:95.31px;font-size:13.4px;color:#f0f0f0;transform:scaleX(1.1250);">0,3795</span>
<span class="t dv" style="left:802.70px;top:95.31px;font-size:13.4px;color:#f0f0f0;transform:scaleX(1.1250);">0,2496</span>
<span class="t dv" style="left:875.20px;top:95.31px;font-size:13.4px;color:#f0f0f0;transform:scaleX(1.1250);">0,3395</span>
<span class="t dv" style="left:947.70px;top:95.31px;font-size:13.4px;color:#f0f0f0;transform:scaleX(1.1250);">0,2681</span>
<span class="t dv" style="left:1045.20px;top:95.31px;font-size:13.4px;color:#f0f0f0;transform:scaleX(1.1250);">0,2626</span>
<span class="t dv" style="left:1149.20px;top:95.31px;font-size:13.4px;color:#f0f0f0;transform:scaleX(1.1250);">0,5122</span>
<span class="t dv" style="left:1231.20px;top:95.31px;font-size:13.4px;color:#f0f0f0;transform:scaleX(1.1250);">0,2161</span>
<span class="t dv" style="left:15.00px;top:117.50px;font-size:13px;color:#f4f4f4;font-weight:700;transform:scaleX(1.1210);">Target y:CIE31</span>
<span class="t dv" style="left:155.95px;top:117.16px;font-size:13.4px;color:#f0f0f0;transform:scaleX(1.1250);">0,3290</span>
<span class="t dv" style="left:238.45px;top:117.16px;font-size:13.4px;color:#f0f0f0;transform:scaleX(1.1250);">0,3290</span>
<span class="t dv" style="left:320.95px;top:117.16px;font-size:13.4px;color:#f0f0f0;transform:scaleX(1.1250);">0,3290</span>
<span class="t dv" style="left:403.45px;top:117.16px;font-size:13.4px;color:#f0f0f0;transform:scaleX(1.1250);">0,3290</span>
<span class="t dv" style="left:486.20px;top:117.16px;font-size:13.4px;color:#f0f0f0;transform:scaleX(1.1250);">0,3290</span>
<span class="t dv" style="left:568.20px;top:117.16px;font-size:13.4px;color:#f0f0f0;transform:scaleX(1.1250);">0,3290</span>
<span class="t dv" style="left:641.20px;top:117.16px;font-size:13.4px;color:#f0f0f0;transform:scaleX(1.1250);">0,3642</span>
<span class="t dv" style="left:720.20px;top:117.16px;font-size:13.4px;color:#f0f0f0;transform:scaleX(1.1250);">0,3562</span>
<span class="t dv" style="left:802.70px;top:117.16px;font-size:13.4px;color:#f0f0f0;transform:scaleX(1.1250);">0,2656</span>
<span class="t dv" style="left:875.20px;top:117.16px;font-size:13.4px;color:#f0f0f0;transform:scaleX(1.1250);">0,4271</span>
<span class="t dv" style="left:947.70px;top:117.16px;font-size:13.4px;color:#f0f0f0;transform:scaleX(1.1250);">0,2525</span>
<span class="t dv" style="left:1045.20px;top:117.16px;font-size:13.4px;color:#f0f0f0;transform:scaleX(1.1250);">0,3616</span>
<span class="t dv" style="left:1149.20px;top:117.16px;font-size:13.4px;color:#f0f0f0;transform:scaleX(1.1250);">0,4063</span>
<span class="t dv" style="left:1231.20px;top:117.16px;font-size:13.4px;color:#f0f0f0;transform:scaleX(1.1250);">0,1903</span>
<span class="t dv" style="left:15.00px;top:139.35px;font-size:13px;color:#f4f4f4;font-weight:700;transform:scaleX(1.1231);">Target Y</span>
<span class="t dv" style="left:155.95px;top:139.01px;font-size:13.4px;color:#f0f0f0;transform:scaleX(1.1250);">360,8488</span>
<span class="t dv" style="left:238.45px;top:139.01px;font-size:13.4px;color:#f0f0f0;transform:scaleX(1.1250);">285,5389</span>
<span class="t dv" style="left:320.95px;top:139.01px;font-size:13.4px;color:#f0f0f0;transform:scaleX(1.1250);">230,0761</span>
<span class="t dv" style="left:403.45px;top:139.01px;font-size:13.4px;color:#f0f0f0;transform:scaleX(1.1250);">177,1843</span>
<span class="t dv" style="left:486.20px;top:139.01px;font-size:13.4px;color:#f0f0f0;transform:scaleX(1.1250);">123,3794</span>
<span class="t dv" style="left:568.20px;top:139.01px;font-size:13.4px;color:#f0f0f0;transform:scaleX(1.1250);">0,0000</span>
<span class="t dv" style="left:641.20px;top:139.01px;font-size:13.4px;color:#f0f0f0;transform:scaleX(1.1250);">36,3494</span>
<span class="t dv" style="left:720.20px;top:139.01px;font-size:13.4px;color:#f0f0f0;transform:scaleX(1.1250);">125,9188</span>
<span class="t dv" style="left:802.70px;top:139.01px;font-size:13.4px;color:#f0f0f0;transform:scaleX(1.1250);">67,4729</span>
<span class="t dv" style="left:875.20px;top:139.01px;font-size:13.4px;color:#f0f0f0;transform:scaleX(1.1250);">47,0275</span>
<span class="t dv" style="left:947.70px;top:139.01px;font-size:13.4px;color:#f0f0f0;transform:scaleX(1.1250);">84,1445</span>
<span class="t dv" style="left:1045.20px;top:139.01px;font-size:13.4px;color:#f0f0f0;transform:scaleX(1.1250);">151,0983</span>
<span class="t dv" style="left:1149.20px;top:139.01px;font-size:13.4px;color:#f0f0f0;transform:scaleX(1.1250);">102,2928</span>
<span class="t dv" style="left:1231.20px;top:139.01px;font-size:13.4px;color:#f0f0f0;transform:scaleX(1.1250);">42,4308</span>
<span class="t dv" style="left:15.00px;top:161.20px;font-size:13px;color:#f4f4f4;font-weight:700;transform:scaleX(1.1568);">ΔE 2000</span>
<span class="t dv" style="left:155.95px;top:160.86px;font-size:13.4px;color:#f0f0f0;transform:scaleX(1.1250);">0,4302</span>
<span class="t dv" style="left:238.45px;top:160.86px;font-size:13.4px;color:#f0f0f0;transform:scaleX(1.1250);">0,1091</span>
<span class="t dv" style="left:320.95px;top:160.86px;font-size:13.4px;color:#f0f0f0;transform:scaleX(1.1250);">0,4219</span>
<span class="t dv" style="left:403.45px;top:160.86px;font-size:13.4px;color:#f0f0f0;transform:scaleX(1.1250);">0,3316</span>
<span class="t dv" style="left:486.20px;top:160.86px;font-size:13.4px;color:#f0f0f0;transform:scaleX(1.1250);">0,4883</span>
<span class="t dv" style="left:568.20px;top:160.86px;font-size:13.4px;color:#f0f0f0;transform:scaleX(1.1250);">0,8591</span>
<span class="t dv" style="left:641.20px;top:160.86px;font-size:13.4px;color:#f0f0f0;transform:scaleX(1.1250);">1,7484</span>
<span class="t dv" style="left:720.20px;top:160.86px;font-size:13.4px;color:#f0f0f0;transform:scaleX(1.1250);">2,3334</span>
<span class="t dv" style="left:802.70px;top:160.86px;font-size:13.4px;color:#f0f0f0;transform:scaleX(1.1250);">2,6753</span>
<span class="t dv" style="left:875.20px;top:160.86px;font-size:13.4px;color:#f0f0f0;transform:scaleX(1.1250);">4,2762</span>
<span class="t dv" style="left:947.70px;top:160.86px;font-size:13.4px;color:#f0f0f0;transform:scaleX(1.1250);">4,8613</span>
<span class="t dv" style="left:1045.20px;top:160.86px;font-size:13.4px;color:#f0f0f0;transform:scaleX(1.1250);">4,8871</span>
<span class="t dv" style="left:1149.20px;top:160.86px;font-size:13.4px;color:#f0f0f0;transform:scaleX(1.1250);">3,0402</span>
<span class="t dv" style="left:1231.20px;top:160.86px;font-size:13.4px;color:#f0f0f0;transform:scaleX(1.1250);">5,9905</span>
<span class="t dv" style="left:15.00px;top:183.05px;font-size:13px;color:#f4f4f4;font-weight:700;transform:scaleX(1.1777);">ΔE ITP</span>
<span class="t dv" style="left:155.95px;top:182.71px;font-size:13.4px;color:#f0f0f0;transform:scaleX(1.1250);">0,3184</span>
<span class="t dv" style="left:238.45px;top:182.71px;font-size:13.4px;color:#f0f0f0;transform:scaleX(1.1250);">0,3323</span>
<span class="t dv" style="left:320.95px;top:182.71px;font-size:13.4px;color:#f0f0f0;transform:scaleX(1.1250);">1,0027</span>
<span class="t dv" style="left:403.45px;top:182.71px;font-size:13.4px;color:#f0f0f0;transform:scaleX(1.1250);">0,9418</span>
<span class="t dv" style="left:486.20px;top:182.71px;font-size:13.4px;color:#f0f0f0;transform:scaleX(1.1250);">1,4578</span>
<span class="t dv" style="left:568.20px;top:182.71px;font-size:13.4px;color:#f0f0f0;transform:scaleX(1.1250);">76,4988</span>
<span class="t dv" style="left:641.20px;top:182.71px;font-size:13.4px;color:#f0f0f0;transform:scaleX(1.1250);">5,5947</span>
<span class="t dv" style="left:720.20px;top:182.71px;font-size:13.4px;color:#f0f0f0;transform:scaleX(1.1250);">6,0892</span>
<span class="t dv" style="left:802.70px;top:182.71px;font-size:13.4px;color:#f0f0f0;transform:scaleX(1.1250);">7,3946</span>
<span class="t dv" style="left:875.20px;top:182.71px;font-size:13.4px;color:#f0f0f0;transform:scaleX(1.1250);">10,4168</span>
<span class="t dv" style="left:947.70px;top:182.71px;font-size:13.4px;color:#f0f0f0;transform:scaleX(1.1250);">10,7257</span>
<span class="t dv" style="left:1045.20px;top:182.71px;font-size:13.4px;color:#f0f0f0;transform:scaleX(1.1250);">12,2575</span>
<span class="t dv" style="left:1149.20px;top:182.71px;font-size:13.4px;color:#f0f0f0;transform:scaleX(1.1250);">14,8929</span>
<span class="t dv" style="left:1231.20px;top:182.71px;font-size:13.4px;color:#f0f0f0;transform:scaleX(1.1250);">17,8412</span>
<div class="a" style="left:0;top:200px;width:1263px;height:14px;background:#5c5c5c"></div>
<div class="a" style="left:19px;top:201px;width:372px;height:12px;border-radius:6px;background:#484848"></div>
<div class="sbtn" style="left:2px;top:200.5px;height:13px"></div><svg class="a" style="left:4.5px;top:202.5px" width="8" height="9"><path d="M7 0.5v8l-6-4z" fill="#333"/></svg>
<div class="sbtn" style="left:1245px;top:200.5px;height:13px"></div><svg class="a" style="left:1248.5px;top:202.5px" width="8" height="9"><path d="M1 0.5v8l6-4z" fill="#333"/></svg>
</div>
<!-- part_bottom -->
<div class="a" style="left:0;top:798.5px;width:1560px;height:62.5px;background:#2f2f2f;overflow:hidden">
<div class="tab" style="left:-9px"></div>
<div class="chip" style="left:-4px;top:5.5px;height:24px;background:rgb(8, 138, 172)"></div>
<span class="t" style="left:4.12px;top:35.23px;font-size:10.6px;color:#2a2a2a;transform:scaleX(0.9600);-webkit-text-stroke:.45px #2a2a2a;">Cyan</span>
<div class="tab" style="left:43px"></div>
<div class="chip" style="left:48px;top:5.5px;height:24px;background:rgb(255, 0, 0)"></div>
<span class="t" style="left:44.98px;top:35.23px;font-size:10.6px;color:#2a2a2a;transform:scaleX(0.9300);-webkit-text-stroke:.45px #2a2a2a;">100% Red</span>
<div class="tab" style="left:95px"></div>
<div class="chip" style="left:100px;top:5.5px;height:12.3px;background:rgb(0, 255, 0)"></div>
<span class="t" style="left:106.01px;top:23.23px;font-size:10.6px;color:#2a2a2a;transform:scaleX(0.9500);-webkit-text-stroke:.45px #2a2a2a;">100%</span>
<span class="t" style="left:106.01px;top:35.23px;font-size:10.6px;color:#2a2a2a;transform:scaleX(0.9500);-webkit-text-stroke:.45px #2a2a2a;">Green</span>
<div class="tab" style="left:147px"></div>
<div class="chip" style="left:152px;top:5.5px;height:12.3px;background:rgb(0, 0, 255)"></div>
<span class="t" style="left:159.12px;top:23.23px;font-size:10.6px;color:#2a2a2a;transform:scaleX(0.9500);-webkit-text-stroke:.45px #2a2a2a;">100%</span>
<span class="t" style="left:159.12px;top:35.23px;font-size:10.6px;color:#2a2a2a;transform:scaleX(0.9500);-webkit-text-stroke:.45px #2a2a2a;">Blue</span>
<div class="tab" style="left:199px"></div>
<div class="chip" style="left:204px;top:5.5px;height:12.3px;background:rgb(0, 255, 255)"></div>
<span class="t" style="left:211.12px;top:23.23px;font-size:10.6px;color:#2a2a2a;transform:scaleX(0.9500);-webkit-text-stroke:.45px #2a2a2a;">100%</span>
<span class="t" style="left:211.12px;top:35.23px;font-size:10.6px;color:#2a2a2a;transform:scaleX(0.9500);-webkit-text-stroke:.45px #2a2a2a;">Cyan</span>
<div class="tab" style="left:251px"></div>
<div class="chip" style="left:256px;top:5.5px;height:12.3px;background:rgb(255, 0, 255)"></div>
<span class="t" style="left:255.99px;top:23.23px;font-size:10.6px;color:#2a2a2a;transform:scaleX(0.9500);-webkit-text-stroke:.45px #2a2a2a;">100%</span>
<span class="t" style="left:255.99px;top:35.23px;font-size:10.6px;color:#2a2a2a;transform:scaleX(0.9700);-webkit-text-stroke:.45px #2a2a2a;">Magenta</span>
<div class="tab" style="left:303px"></div>
<div class="chip" style="left:308px;top:5.5px;height:12.3px;background:rgb(255, 255, 0)"></div>
<span class="t" style="left:313.17px;top:23.23px;font-size:10.6px;color:#2a2a2a;transform:scaleX(0.9500);-webkit-text-stroke:.45px #2a2a2a;">100%</span>
<span class="t" style="left:313.17px;top:35.23px;font-size:10.6px;color:#2a2a2a;transform:scaleX(0.9500);-webkit-text-stroke:.45px #2a2a2a;">Yellow</span>
<div class="tab" style="left:355px"></div>
<div class="chip" style="left:360px;top:5.5px;height:24px;background:rgb(114, 65, 40)"></div>
<span class="t" style="left:373.78px;top:35.23px;font-size:10.6px;color:#2a2a2a;transform:scaleX(0.9600);-webkit-text-stroke:.45px #2a2a2a;">2E</span>
<div class="tab" style="left:407px"></div>
<div class="chip" style="left:412px;top:5.5px;height:24px;background:rgb(207, 141, 106)"></div>
<span class="t" style="left:426.06px;top:35.23px;font-size:10.6px;color:#2a2a2a;transform:scaleX(0.9600);-webkit-text-stroke:.45px #2a2a2a;">2F</span>
<div class="tab" style="left:459px"></div>
<div class="chip" style="left:464px;top:5.5px;height:24px;background:rgb(255, 200, 155)"></div>
<span class="t" style="left:477.78px;top:35.23px;font-size:10.6px;color:#2a2a2a;transform:scaleX(0.9600);-webkit-text-stroke:.45px #2a2a2a;">2K</span>
<div class="tab" style="left:511px"></div>
<div class="chip" style="left:516px;top:5.5px;height:24px;background:rgb(255, 200, 172)"></div>
<span class="t" style="left:529.50px;top:35.23px;font-size:10.6px;color:#2a2a2a;transform:scaleX(0.9600);-webkit-text-stroke:.45px #2a2a2a;">5D</span>
<div class="tab" style="left:563px"></div>
<div class="chip" style="left:568px;top:5.5px;height:24px;background:rgb(247, 168, 125)"></div>
<span class="t" style="left:581.78px;top:35.23px;font-size:10.6px;color:#2a2a2a;transform:scaleX(0.9600);-webkit-text-stroke:.45px #2a2a2a;">7E</span>
<div class="tab" style="left:615px"></div>
<div class="chip" style="left:620px;top:5.5px;height:24px;background:rgb(200, 142, 92)"></div>
<span class="t" style="left:634.06px;top:35.23px;font-size:10.6px;color:#2a2a2a;transform:scaleX(0.9600);-webkit-text-stroke:.45px #2a2a2a;">7F</span>
<div class="tab" style="left:667px"></div>
<div class="chip" style="left:672px;top:5.5px;height:24px;background:rgb(147, 94, 52)"></div>
<span class="t" style="left:685.21px;top:35.23px;font-size:10.6px;color:#2a2a2a;transform:scaleX(0.9600);-webkit-text-stroke:.45px #2a2a2a;">7G</span>
<div class="tab" style="left:719px"></div>
<div class="chip" style="left:724px;top:5.5px;height:24px;background:rgb(212, 154, 118)"></div>
<span class="t" style="left:737.50px;top:35.23px;font-size:10.6px;color:#2a2a2a;transform:scaleX(0.9600);-webkit-text-stroke:.45px #2a2a2a;">7H</span>
<div class="tab" style="left:771px"></div>
<div class="chip" style="left:776px;top:5.5px;height:24px;background:rgb(166, 92, 35)"></div>
<span class="t" style="left:791.76px;top:35.23px;font-size:10.6px;color:#2a2a2a;transform:scaleX(0.9600);-webkit-text-stroke:.45px #2a2a2a;">7I</span>
<div class="tab" style="left:823px"></div>
<div class="chip" style="left:828px;top:5.5px;height:24px;background:rgb(216, 136, 95)"></div>
<span class="t" style="left:842.63px;top:35.23px;font-size:10.6px;color:#2a2a2a;transform:scaleX(0.9600);-webkit-text-stroke:.45px #2a2a2a;">7J</span>
<div class="tab" style="left:875px"></div>
<div class="chip" style="left:880px;top:5.5px;height:24px;background:rgb(214, 145, 110)"></div>
<span class="t" style="left:893.50px;top:35.23px;font-size:10.6px;color:#2a2a2a;transform:scaleX(0.9600);-webkit-text-stroke:.45px #2a2a2a;">8D</span>
<div class="tab" style="left:927px"></div>
<div class="chip" style="left:932px;top:5.5px;height:24px;background:rgb(250, 152, 120)"></div>
<span class="t" style="left:945.78px;top:35.23px;font-size:10.6px;color:#2a2a2a;transform:scaleX(0.9600);-webkit-text-stroke:.45px #2a2a2a;">8E</span>
<div class="tab" style="left:979px"></div>
<div class="chip" style="left:984px;top:5.5px;height:24px;background:rgb(210, 148, 112)"></div>
<span class="t" style="left:998.06px;top:35.23px;font-size:10.6px;color:#2a2a2a;transform:scaleX(0.9600);-webkit-text-stroke:.45px #2a2a2a;">8F</span>
<div class="tab" style="left:1031px"></div>
<div class="chip" style="left:1036px;top:5.5px;height:24px;background:rgb(203, 140, 106)"></div>
<span class="t" style="left:1049.21px;top:35.23px;font-size:10.6px;color:#2a2a2a;transform:scaleX(0.9600);-webkit-text-stroke:.45px #2a2a2a;">8G</span>
<div class="tab" style="left:1083px"></div>
<div class="chip" style="left:1088px;top:5.5px;height:24px;background:rgb(213, 148, 110)"></div>
<span class="t" style="left:1101.50px;top:35.23px;font-size:10.6px;color:#2a2a2a;transform:scaleX(0.9600);-webkit-text-stroke:.45px #2a2a2a;">8H</span>
<div class="tab" style="left:1135px"></div>
<div class="chip" style="left:1140px;top:5.5px;height:24px;background:rgb(125, 78, 42)"></div>
<span class="t" style="left:1155.76px;top:35.23px;font-size:10.6px;color:#2a2a2a;transform:scaleX(0.9600);-webkit-text-stroke:.45px #2a2a2a;">8I</span>
<div class="tab sel" style="left:1187px"></div>
<div class="chip" style="left:1192px;top:5.5px;height:24px;background:rgb(222, 140, 94)"></div>
<span class="t" style="left:1206.34px;top:35.23px;font-size:10.6px;color:#ffffff;font-weight:700;transform:scaleX(0.9600);">8J</span>
<div class="a" style="left:0;top:49.5px;width:1237px;height:11.5px;background:#646464"></div>
<div class="a" style="left:607.5px;top:50.0px;width:615.5px;height:10.5px;border-radius:5px;background:#4b4b4b"></div>
<div class="sbtn" style="left:-5px;top:49.5px;width:12px;height:11.5px"></div><svg class="a" style="left:0;top:51.5px" width="7" height="8"><path d="M6 0v8l-5.5-4z" fill="#333"/></svg>
<div class="sbtn" style="left:1226px;top:49.5px;width:11px;height:11.5px"></div><svg class="a" style="left:1229px;top:51.5px" width="7" height="8"><path d="M1 0v8l5.5-4z" fill="#333"/></svg>
<div class="btn" style="left:1238.5px;top:0;width:47.5px;height:18px;border-radius:4px 4px 0 0"></div>
<div class="a cb" style="left:1254.8px;top:2.0px;width:15.0px;height:15.0px"></div>
<svg class="a" style="left:1257px;top:5.5px" width="11" height="7"><path d="M0.5 6.5h10l-5-5.5z" fill="#3a3a3a"/></svg>
<div class="btn" style="left:1238.5px;top:19.5px;width:47.5px;height:43px;background:linear-gradient(#8e8e8e,#6c6c6c)"></div>
<div class="a" style="left:1246.3px;top:25.0px;width:30.7px;height:30.8px;box-sizing:border-box;border:2.4px solid #2a2a2a;border-radius:5px;background:linear-gradient(#a8a8a8 0,#a0a0a0 50%,#8c8c8c 50%,#969696 100%)"></div>
<div class="a" style="left:1255px;top:33.299999999999955px;width:13.7px;height:13.9px;background:linear-gradient(#1c1c1c 0,#161616 50%,#000 50%)"></div>
<div class="btn" style="left:1287.2px;top:0.5px;width:45.799999999999955px;height:29.5px;border-radius:4px 0 0 0;"></div>
<div class="a cb" style="left:1300px;top:5.5px;width:20px;height:20px"></div>
<div class="btn" style="left:1334px;top:0.5px;width:44px;height:29.5px;"></div>
<div class="a cb" style="left:1345.8px;top:5.5px;width:20px;height:20px"></div>
<div class="btn" style="left:1379px;top:0.5px;width:44px;height:29.5px;"></div>
<div class="a cb" style="left:1390.8px;top:5.5px;width:20px;height:20px"></div>
<div class="btn" style="left:1424.2px;top:0.5px;width:43.399999999999864px;height:29.5px;"></div>
<div class="a cb" style="left:1435.8px;top:5.5px;width:20px;height:20px"></div>
<div class="btn" style="left:1468.2px;top:0.5px;width:45.09999999999991px;height:29.5px;background:linear-gradient(#3e3e3e,#2a2a2a);"></div>
<div class="a" style="left:1480.8px;top:5.5px;width:20px;height:20px;border-radius:50%;background:linear-gradient(#303030,#3c3c3c)"></div>
<div class="btn" style="left:1514px;top:0.5px;width:44.5px;height:29.5px;"></div>
<div class="a cb" style="left:1527px;top:5.5px;width:20px;height:20px"></div>
<div class="a" style="left:1306px;top:11.5px;width:8px;height:8px;background:#3a3a3a"></div>
<svg class="a" style="left:1351px;top:10.0px" width="11" height="11"><path d="M1.5 0.5v10l8.5-5z" fill="#3a3a3a"/></svg>
<svg class="a" style="left:1394px;top:9.5px" width="14" height="12"><path d="M4 1H1.5v10H4M10 1h2.5v10H10" fill="none" stroke="#3a3a3a" stroke-width="2.2"/><rect x="4.6" y="5" width="1.6" height="1.8" fill="#3a3a3a"/><rect x="7.8" y="5" width="1.6" height="1.8" fill="#3a3a3a"/></svg>
<svg class="a" style="left:1438.8px;top:11.9px" width="14" height="7.2" viewBox="0 0 16 9"><path d="M8 4.5C6.5 2 5.2 1 3.8 1 2.2 1 1 2.5 1 4.5S2.2 8 3.8 8C5.2 8 6.5 7 8 4.5S10.800 1 12.2 1C13.8 1 15 2.5 15 4.5S13.8 8 12.2 8C10.800 8 9.5 7 8 4.500z" fill="none" stroke="#3a3a3a" stroke-width="1.7"/></svg>
<svg class="a" style="left:1483.8px;top:8.5px" width="14" height="14"><g fill="none" stroke="#1c1c1c" stroke-width="2"><path d="M11.300 5.200A4.600 4.600 0 0 0 3.400 4.100"/><path d="M2.700 8.800A4.600 4.600 0 0 0 10.600 9.900"/></g><path d="M12.900 2.200v4.400H8.500zM1.100 11.800V7.400h4.400z" fill="#1c1c1c"/></svg>
<div class="btn" style="left:1287.2px;top:31.5px;width:135.8px;height:31px"></div>
<div class="btn" style="left:1424.2px;top:31.5px;width:134.3px;height:31px"></div>
<div class="a cb" style="left:1308px;top:36.5px;width:20px;height:20px"></div>
<div class="a cb" style="left:1521.3px;top:36.5px;width:20px;height:20px"></div>
<span class="t" style="left:1312.58px;top:35.29px;font-size:19.5px;color:#3a3a3a;">«</span>
<span class="t" style="left:1525.88px;top:35.29px;font-size:19.5px;color:#3a3a3a;">»</span>
<span class="t" style="left:1344.50px;top:35.62px;font-size:22.3px;color:#303030;transform:scaleX(1.0227);-webkit-text-stroke:.7px #303030;">Back</span>
<span class="t" style="left:1451.30px;top:35.42px;font-size:22.3px;color:#303030;transform:scaleX(1.1341);-webkit-text-stroke:.7px #303030;">Next</span>
</div>
</div></body></html>
